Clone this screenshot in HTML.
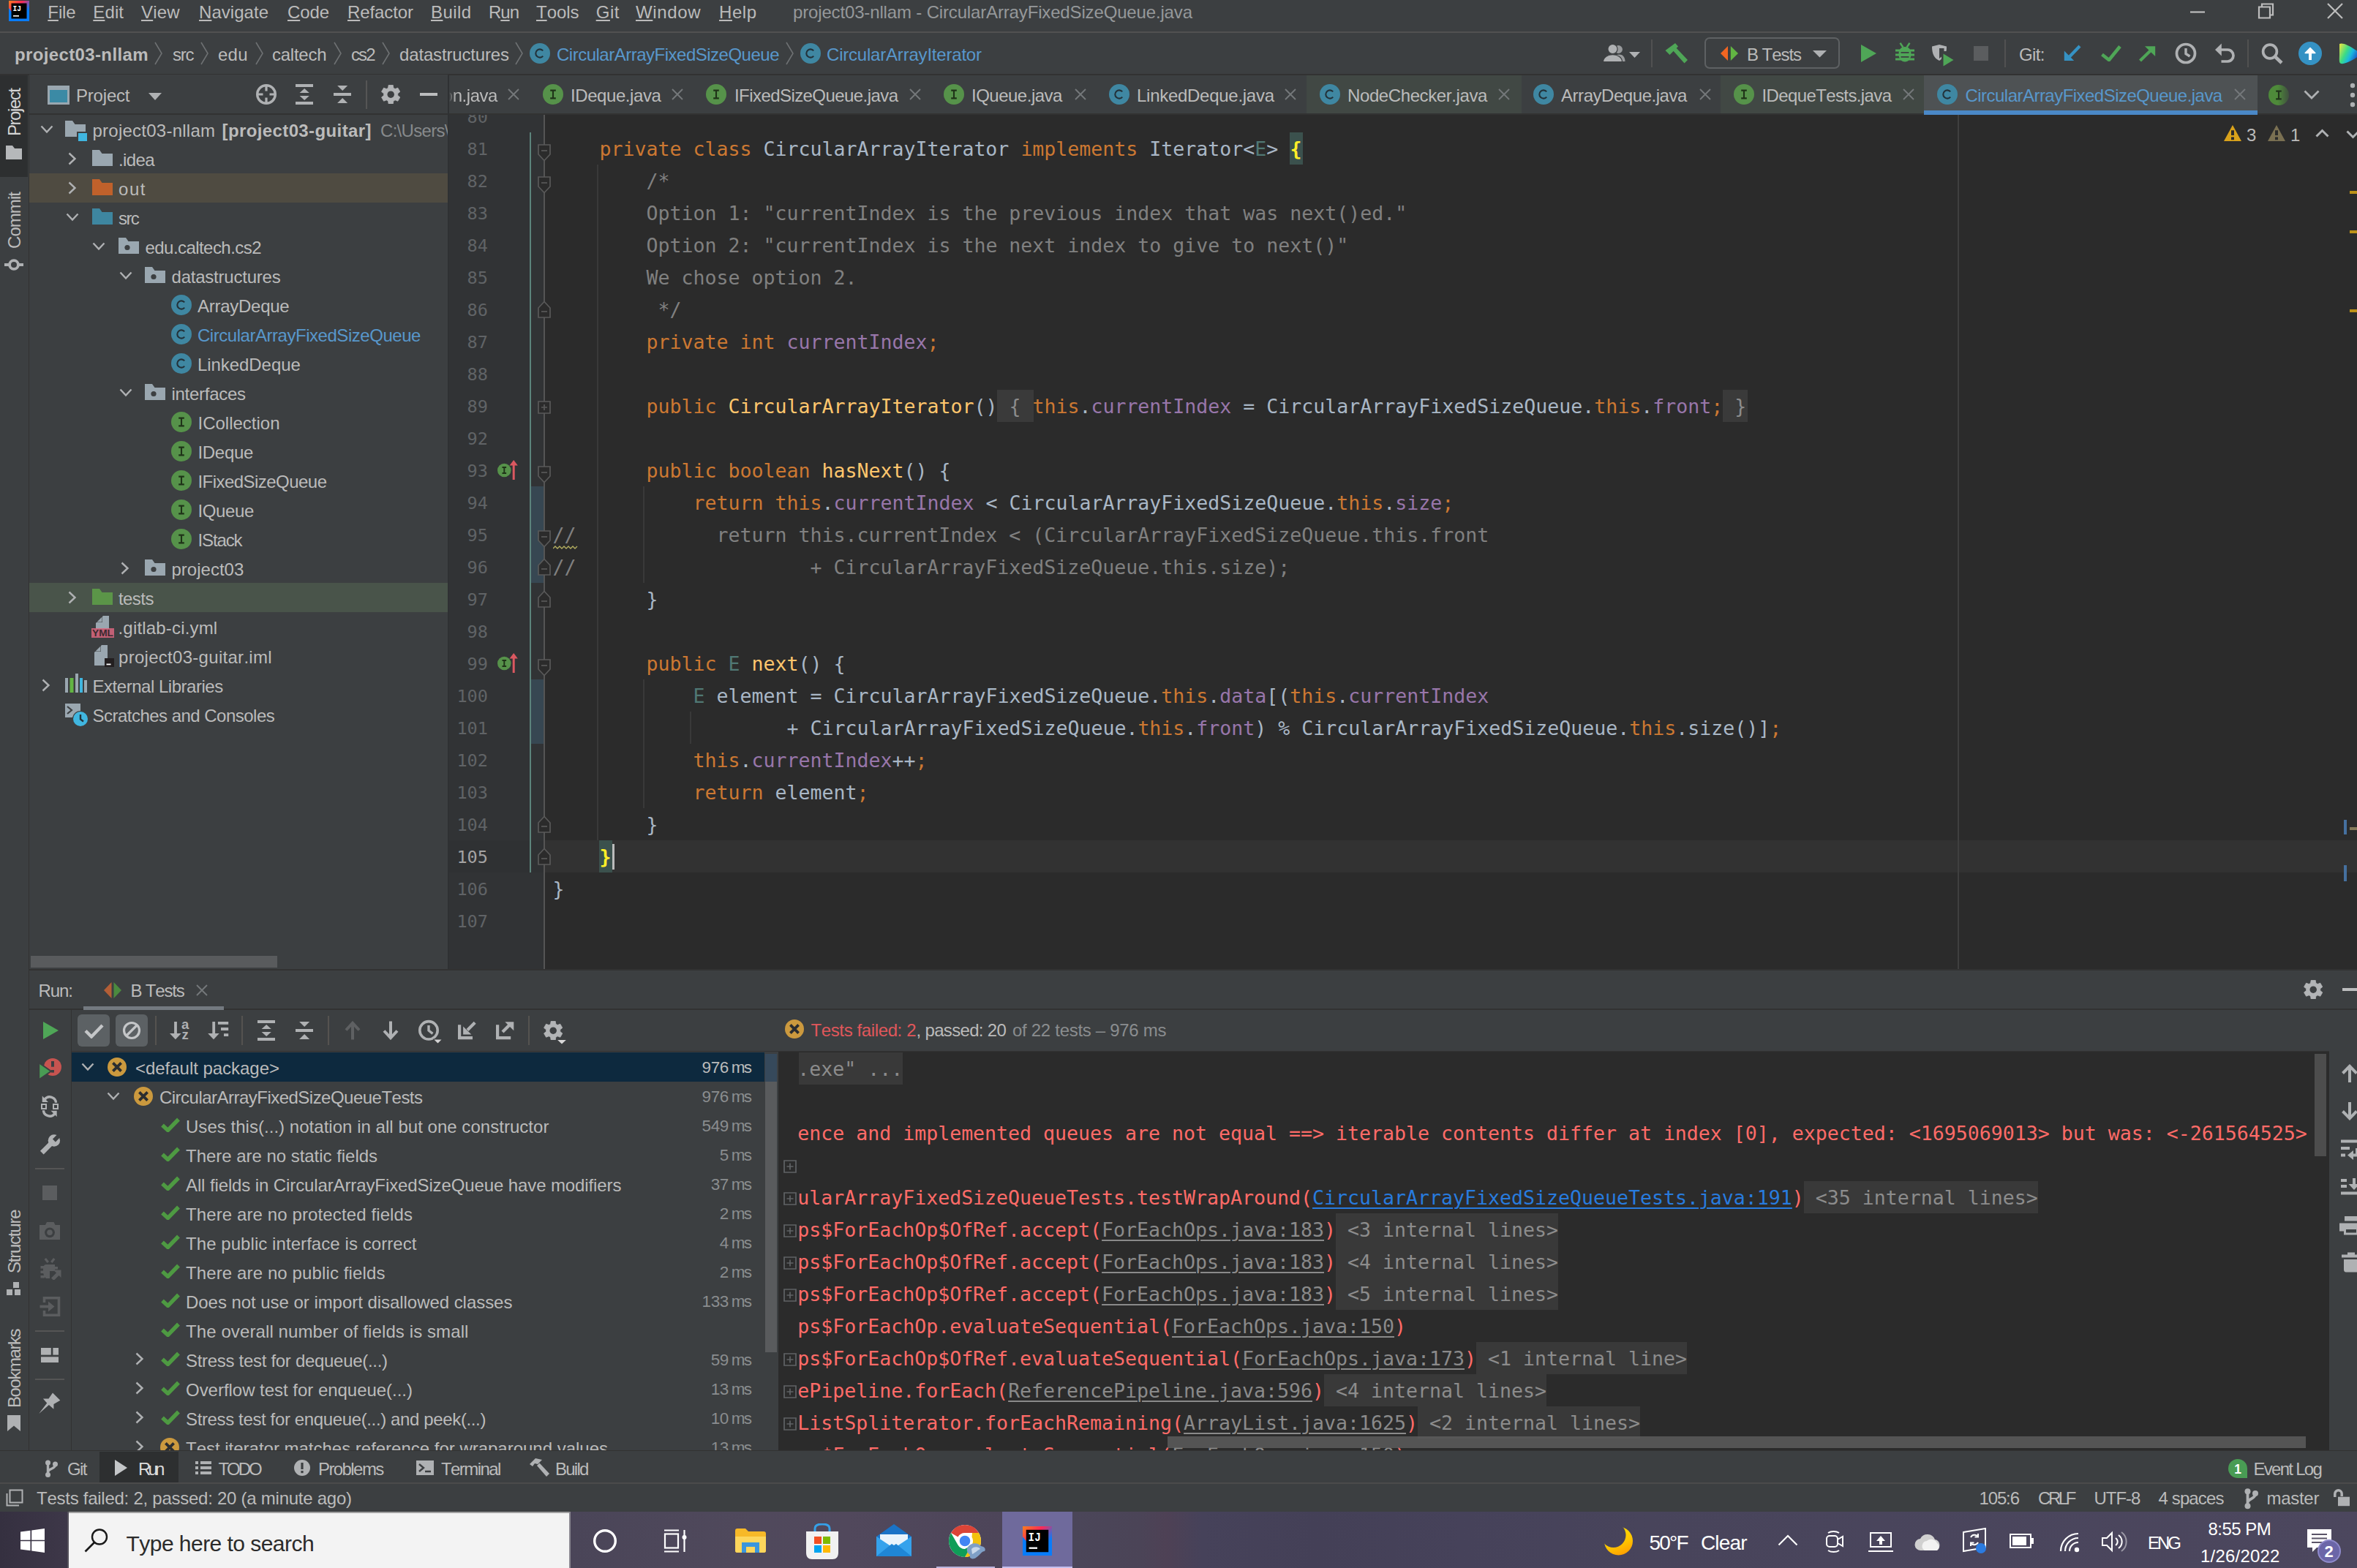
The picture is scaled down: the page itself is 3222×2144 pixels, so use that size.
<!DOCTYPE html>
<html><head><meta charset="utf-8"><title>project03-nllam - CircularArrayFixedSizeQueue.java</title><style>
html,body{margin:0;padding:0;background:#3c3f41;}
body{width:3222px;height:2144px;overflow:hidden;position:relative;font-kerning:none;}
#r{position:absolute;left:0;top:0;width:3222px;height:2144px;overflow:hidden;}
#r div,#r svg{position:absolute;white-space:pre;}
.u{font-family:"Liberation Sans",sans-serif;}
.m{font-family:"DejaVu Sans Mono","Liberation Mono",monospace;}
</style></head><body><div id="r">
<div style="left:0px;top:0px;width:3222px;height:2066px;background:#3c3f41;"></div>
<div style="left:0px;top:43px;width:3222px;height:2px;background:#515151;"></div>
<div style="left:0px;top:101px;width:3222px;height:2px;background:#323232;"></div>
<svg style="left:12px;top:1px;" width="28" height="28" viewBox="0 0 28 28"><defs><linearGradient id="lg1" x1="0" y1="0" x2="1" y2="1"><stop offset="0" stop-color="#fc801d"/><stop offset="0.35" stop-color="#fe2857"/><stop offset="0.7" stop-color="#087cfa"/><stop offset="1" stop-color="#087cfa"/></linearGradient></defs>
<rect width="28" height="28" fill="url(#lg1)"/><path d="M0 10 L0 28 L14 28 Z" fill="#087cfa"/><rect x="3.5" y="3.5" width="21" height="21" fill="#000"/><rect x="6" y="20" width="8" height="1.6" fill="#fff"/>
<text x="5.400" y="14.300" font-family="Liberation Mono, monospace" font-weight="bold" font-size="11.500" fill="#fff" textLength="11.500" lengthAdjust="spacingAndGlyphs">IJ</text></svg>
<div class="u" style="left:65.3px;top:1.18px;height:31px;line-height:31px;font-size:24px;color:#bbbbbb;letter-spacing:-0.091px;"><span style="text-decoration:underline;text-decoration-thickness:2px;text-underline-offset:2px">F</span>ile</div>
<div class="u" style="left:127.3px;top:1.18px;height:31px;line-height:31px;font-size:24px;color:#bbbbbb;letter-spacing:0.115px;"><span style="text-decoration:underline;text-decoration-thickness:2px;text-underline-offset:2px">E</span>dit</div>
<div class="u" style="left:193px;top:1.18px;height:31px;line-height:31px;font-size:24px;color:#bbbbbb;letter-spacing:0.160px;"><span style="text-decoration:underline;text-decoration-thickness:2px;text-underline-offset:2px">V</span>iew</div>
<div class="u" style="left:272px;top:1.18px;height:31px;line-height:31px;font-size:24px;color:#bbbbbb;letter-spacing:0.040px;"><span style="text-decoration:underline;text-decoration-thickness:2px;text-underline-offset:2px">N</span>avigate</div>
<div class="u" style="left:393px;top:1.18px;height:31px;line-height:31px;font-size:24px;color:#bbbbbb;letter-spacing:-0.125px;"><span style="text-decoration:underline;text-decoration-thickness:2px;text-underline-offset:2px">C</span>ode</div>
<div class="u" style="left:475px;top:1.18px;height:31px;line-height:31px;font-size:24px;color:#bbbbbb;letter-spacing:-0.100px;"><span style="text-decoration:underline;text-decoration-thickness:2px;text-underline-offset:2px">R</span>efactor</div>
<div class="u" style="left:589px;top:1.18px;height:31px;line-height:31px;font-size:24px;color:#bbbbbb;letter-spacing:0.408px;"><span style="text-decoration:underline;text-decoration-thickness:2px;text-underline-offset:2px">B</span>uild</div>
<div class="u" style="left:668px;top:1.18px;height:31px;line-height:31px;font-size:24px;color:#bbbbbb;letter-spacing:-1.014px;">R<span style="text-decoration:underline;text-decoration-thickness:2px;text-underline-offset:2px">u</span>n</div>
<div class="u" style="left:733px;top:1.18px;height:31px;line-height:31px;font-size:24px;color:#bbbbbb;letter-spacing:-0.047px;"><span style="text-decoration:underline;text-decoration-thickness:2px;text-underline-offset:2px">T</span>ools</div>
<div class="u" style="left:814.7px;top:1.18px;height:31px;line-height:31px;font-size:24px;color:#bbbbbb;letter-spacing:0.566px;"><span style="text-decoration:underline;text-decoration-thickness:2px;text-underline-offset:2px">G</span>it</div>
<div class="u" style="left:869px;top:1.18px;height:31px;line-height:31px;font-size:24px;color:#bbbbbb;letter-spacing:0.648px;"><span style="text-decoration:underline;text-decoration-thickness:2px;text-underline-offset:2px">W</span>indow</div>
<div class="u" style="left:983px;top:1.18px;height:31px;line-height:31px;font-size:24px;color:#bbbbbb;letter-spacing:0.547px;"><span style="text-decoration:underline;text-decoration-thickness:2px;text-underline-offset:2px">H</span>elp</div>
<div class="u" style="left:1084px;top:1.18px;height:31px;line-height:31px;font-size:24px;color:#95989a;letter-spacing:-0.154px;">project03-nllam - CircularArrayFixedSizeQueue.java</div>
<svg style="left:2990px;top:0px;" width="232" height="44" viewBox="0 0 232 44"><g stroke="#bdbdbd" stroke-width="2.2" fill="none"><path d="M4 16.5H24"/><path d="M98 9.5H113V24.5H98Z"/><path d="M102 9V5.5H117V20.5H113.5"/><path d="M192 5L212 25M212 5L192 25"/></g></svg>
<div class="u" style="left:20px;top:59.18px;height:31px;line-height:31px;font-size:24px;color:#bbbbbb;letter-spacing:0.365px;font-weight:bold;">project03-nllam</div>
<svg style="left:209px;top:57px;" width="16" height="32" viewBox="0 0 16 32"><path d="M3 1L12 16L3 31" stroke="#6e7173" stroke-width="1.6" fill="none"/></svg>
<div class="u" style="left:236px;top:59.18px;height:31px;line-height:31px;font-size:24px;color:#bbbbbb;letter-spacing:-1.246px;">src</div>
<svg style="left:272px;top:57px;" width="16" height="32" viewBox="0 0 16 32"><path d="M3 1L12 16L3 31" stroke="#6e7173" stroke-width="1.6" fill="none"/></svg>
<div class="u" style="left:298px;top:59.18px;height:31px;line-height:31px;font-size:24px;color:#bbbbbb;letter-spacing:0.229px;">edu</div>
<svg style="left:347px;top:57px;" width="16" height="32" viewBox="0 0 16 32"><path d="M3 1L12 16L3 31" stroke="#6e7173" stroke-width="1.6" fill="none"/></svg>
<div class="u" style="left:372px;top:59.18px;height:31px;line-height:31px;font-size:24px;color:#bbbbbb;letter-spacing:-0.257px;">caltech</div>
<svg style="left:454px;top:57px;" width="16" height="32" viewBox="0 0 16 32"><path d="M3 1L12 16L3 31" stroke="#6e7173" stroke-width="1.6" fill="none"/></svg>
<div class="u" style="left:480px;top:59.18px;height:31px;line-height:31px;font-size:24px;color:#bbbbbb;letter-spacing:-1.924px;">cs2</div>
<svg style="left:520px;top:57px;" width="16" height="32" viewBox="0 0 16 32"><path d="M3 1L12 16L3 31" stroke="#6e7173" stroke-width="1.6" fill="none"/></svg>
<div class="u" style="left:546px;top:59.18px;height:31px;line-height:31px;font-size:24px;color:#bbbbbb;letter-spacing:-0.160px;">datastructures</div>
<svg style="left:702px;top:57px;" width="16" height="32" viewBox="0 0 16 32"><path d="M3 1L12 16L3 31" stroke="#6e7173" stroke-width="1.6" fill="none"/></svg>
<svg style="left:723.5px;top:59px;" width="28" height="28" viewBox="0 0 28 28"><circle cx="14" cy="14" r="14" fill="#3f87a2"/><path d="M18.2 10.4A5.6 5.6 0 1 0 18.2 17.6" stroke="#23323a" stroke-width="2.1" fill="none"/></svg>
<div class="u" style="left:761px;top:59.18px;height:31px;line-height:31px;font-size:24px;color:#5897cb;letter-spacing:-0.498px;">CircularArrayFixedSizeQueue</div>
<svg style="left:1072px;top:57px;" width="16" height="32" viewBox="0 0 16 32"><path d="M3 1L12 16L3 31" stroke="#6e7173" stroke-width="1.6" fill="none"/></svg>
<svg style="left:1093.5px;top:59px;" width="28" height="28" viewBox="0 0 28 28"><circle cx="14" cy="14" r="14" fill="#3f87a2"/><path d="M18.2 10.4A5.6 5.6 0 1 0 18.2 17.6" stroke="#23323a" stroke-width="2.1" fill="none"/></svg>
<div class="u" style="left:1130px;top:59.18px;height:31px;line-height:31px;font-size:24px;color:#5897cb;letter-spacing:-0.202px;">CircularArrayIterator</div>
<div style="left:0px;top:103px;width:39px;height:1963px;background:#3c3f41;"></div>
<div style="left:39px;top:102px;width:1px;height:1882px;background:#323232;"></div>
<div style="left:0px;top:103px;width:38px;height:139px;background:#2d2f30;"></div>
<div class="u" style="left:20px;top:186px;font-size:24px;color:#d4d4d4;line-height:30px;height:30px;transform-origin:0 0;transform:rotate(-90deg) translate(0,-15px);letter-spacing:-1.449px;">Project</div>
<div class="u" style="left:20px;top:340px;font-size:24px;color:#bbb;line-height:30px;height:30px;transform-origin:0 0;transform:rotate(-90deg) translate(0,-15px);letter-spacing:-0.933px;">Commit</div>
<div class="u" style="left:20px;top:1741px;font-size:24px;color:#bbb;line-height:30px;height:30px;transform-origin:0 0;transform:rotate(-90deg) translate(0,-15px);letter-spacing:-1.234px;">Structure</div>
<div class="u" style="left:20px;top:1925px;font-size:24px;color:#bbb;line-height:30px;height:30px;transform-origin:0 0;transform:rotate(-90deg) translate(0,-15px);letter-spacing:-1.442px;">Bookmarks</div>
<svg style="left:8px;top:198px;" width="24" height="22" viewBox="0 0 24 22"><path d="M0 1H9L12 5H22V20H0Z" fill="#b6b8ba"/></svg>
<svg style="left:6px;top:349px;transform:rotate(90deg);" width="26" height="26" viewBox="0 0 26 26"><circle cx="13" cy="13" r="5.900" stroke="#afb1b3" stroke-width="3.800" fill="none"/><path d="M13 0V7.200M13 18.800V26" stroke="#afb1b3" stroke-width="3.800"/></svg>
<svg style="left:9px;top:1753px;" width="20" height="20" viewBox="0 0 20 20"><rect x="9" y="0" width="8" height="8" fill="#afb1b3"/><rect x="0" y="10" width="8" height="8" fill="#afb1b3"/><rect x="11" y="10" width="8" height="8" fill="#afb1b3"/></svg>
<svg style="left:10px;top:1935px;" width="18" height="22" viewBox="0 0 18 22"><path d="M0 0H18V22L9 14.500L0 22Z" fill="#afb1b3"/></svg>
<div style="left:40px;top:102px;width:572px;height:53px;background:#3c3f41;"></div>
<div style="left:40px;top:155px;width:572px;height:2px;background:#323232;"></div>
<div style="left:612px;top:103px;width:2px;height:1222px;background:#2f3133;"></div>
<svg style="left:65px;top:117px;" width="30" height="26" viewBox="0 0 30 26"><rect x="1.5" y="1.5" width="27" height="23" fill="#3b8aa5" stroke="#9aa7b0" stroke-width="3"/><rect x="0" y="0" width="30" height="6" fill="#9aa7b0"/></svg>
<div class="u" style="left:104px;top:115.18px;height:31px;line-height:31px;font-size:24px;color:#bbbbbb;letter-spacing:-0.199px;">Project</div>
<svg style="left:203px;top:126.5px;" width="18" height="10.5" viewBox="0 0 18 10.5"><path d="M0 0H18L9 10Z" fill="#afb1b3"/></svg>
<svg style="left:349px;top:114px;" width="30" height="30" viewBox="0 0 30 30"><g stroke="#afb1b3" fill="none"><circle cx="15" cy="15" r="12.3" stroke-width="3.4"/><path d="M15 3V10.5M15 19.5V27M3 15H10.5M19.5 15H27" stroke-width="3.2"/></g></svg>
<svg style="left:403.7px;top:115px;" width="24.4" height="28" viewBox="0 0 24.4 28"><g fill="#afb1b3"><rect x="0" y="0" width="24.400" height="4"/><rect x="0" y="24" width="24.400" height="4"/><path d="M12.200 6L18.800 12H5.600Z"/><path d="M12.200 22L18.800 16H5.600Z"/></g></svg>
<svg style="left:455.6px;top:117px;" width="24.4" height="24" viewBox="0 0 24.4 24"><g fill="#afb1b3"><rect x="0" y="10" width="24.400" height="4"/><path d="M12.200 6.900L19.200 0H5.100Z"/><path d="M12.200 17.100L19.200 24H5.100Z"/></g></svg>
<div style="left:500px;top:110px;width:2px;height:39px;background:#555555;"></div>
<svg style="left:520.8px;top:115.8px;" width="26.4" height="26.4" viewBox="0 0 26.4 26.4"><polygon points="16.83,4.21 16.21,0.35 10.19,0.35 9.57,4.21 8.42,4.93 7.23,5.56 3.58,4.16 0.56,9.38 3.59,11.85 3.65,13.20 3.59,14.55 0.56,17.02 3.58,22.24 7.23,20.84 8.42,21.47 9.57,22.19 10.19,26.05 16.21,26.05 16.83,22.19 17.98,21.47 19.17,20.84 22.82,22.24 25.84,17.02 22.81,14.55 22.75,13.20 22.81,11.85 25.84,9.38 22.82,4.16 19.17,5.56 17.98,4.93" fill="#b2b4b6" stroke="#b2b4b6" stroke-width="0.8" stroke-linejoin="round"/><circle cx="13.2" cy="13.2" r="4.70" fill="#3c3f41"/></svg>
<div style="left:573.8px;top:127px;width:24.6px;height:4px;background:#bcbdbe;"></div>
<div style="left:40px;top:237px;width:572px;height:40px;background:#4f4b41;"></div>
<div style="left:40px;top:797px;width:572px;height:40px;background:#49544a;"></div>
<svg style="left:54.5px;top:171px;" width="18" height="12" viewBox="0 0 18 12"><path d="M1.5 1.5L9 9.5L16.5 1.5" stroke="#afb1b3" stroke-width="2.4" fill="none"/></svg>
<svg style="left:89px;top:165px;" width="32" height="30" viewBox="0 0 32 30"><path d="M0 0H10L13.5 5H28V22H0Z" fill="#9aa7b0"/><rect x="16" y="15" width="14" height="13" fill="#3c3f41"/><rect x="18" y="17" width="12" height="11" fill="#40b6e0"/></svg>
<div class="u" style="left:126.5px;top:163.18px;height:31px;line-height:31px;font-size:24px;color:#bbbbbb;letter-spacing:0.245px;">project03-nllam</div>
<div class="u" style="left:303.5px;top:163.18px;height:31px;line-height:31px;font-size:24px;color:#bbbbbb;letter-spacing:0.391px;font-weight:bold;">[project03-guitar]</div>
<div style="left:520px;top:157px;width:92px;height:40px;overflow:hidden"><div class="u" style="left:0;top:5.5px;font-size:24px;line-height:31px;color:#878a8c;letter-spacing:-0.7px">C:\Users\nllam\</div></div>
<svg style="left:93px;top:208px;" width="12" height="18" viewBox="0 0 12 18"><path d="M1.5 1.5L9.5 9L1.5 16.5" stroke="#afb1b3" stroke-width="2.4" fill="none"/></svg>
<svg style="left:125.5px;top:205px;" width="28" height="22" viewBox="0 0 28 22"><path d="M0 0H10L13.5 5H28V22H0Z" fill="#9aa7b0"/></svg>
<div class="u" style="left:162px;top:203.18px;height:31px;line-height:31px;font-size:24px;color:#bbbbbb;letter-spacing:-0.636px;">.idea</div>
<svg style="left:93px;top:248px;" width="12" height="18" viewBox="0 0 12 18"><path d="M1.5 1.5L9.5 9L1.5 16.5" stroke="#afb1b3" stroke-width="2.4" fill="none"/></svg>
<svg style="left:125.5px;top:245px;" width="28" height="22" viewBox="0 0 28 22"><path d="M0 0H10L13.5 5H28V22H0Z" fill="#c0612b"/></svg>
<div class="u" style="left:162px;top:243.18px;height:31px;line-height:31px;font-size:24px;color:#bbbbbb;letter-spacing:1.568px;">out</div>
<svg style="left:90px;top:291px;" width="18" height="12" viewBox="0 0 18 12"><path d="M1.5 1.5L9 9.5L16.5 1.5" stroke="#afb1b3" stroke-width="2.4" fill="none"/></svg>
<svg style="left:125.5px;top:285px;" width="28" height="22" viewBox="0 0 28 22"><path d="M0 0H10L13.5 5H28V22H0Z" fill="#3e86a0"/></svg>
<div class="u" style="left:162px;top:283.18px;height:31px;line-height:31px;font-size:24px;color:#bbbbbb;letter-spacing:-1.596px;">src</div>
<svg style="left:126px;top:331px;" width="18" height="12" viewBox="0 0 18 12"><path d="M1.5 1.5L9 9.5L16.5 1.5" stroke="#afb1b3" stroke-width="2.4" fill="none"/></svg>
<svg style="left:161.8px;top:325px;" width="28" height="22" viewBox="0 0 28 22"><path d="M0 0H10L13.5 5H28V22H0Z" fill="#9aa7b0"/><circle cx="12" cy="13.5" r="3.6" fill="#3c3f41"/></svg>
<div class="u" style="left:198.5px;top:323.18px;height:31px;line-height:31px;font-size:24px;color:#bbbbbb;letter-spacing:-0.555px;">edu.caltech.cs2</div>
<svg style="left:162.5px;top:371px;" width="18" height="12" viewBox="0 0 18 12"><path d="M1.5 1.5L9 9.5L16.5 1.5" stroke="#afb1b3" stroke-width="2.4" fill="none"/></svg>
<svg style="left:198px;top:365px;" width="28" height="22" viewBox="0 0 28 22"><path d="M0 0H10L13.5 5H28V22H0Z" fill="#9aa7b0"/><circle cx="12" cy="13.5" r="3.6" fill="#3c3f41"/></svg>
<div class="u" style="left:234.5px;top:363.18px;height:31px;line-height:31px;font-size:24px;color:#bbbbbb;letter-spacing:-0.221px;">datastructures</div>
<svg style="left:234px;top:402.5px;" width="28" height="28" viewBox="0 0 28 28"><circle cx="14" cy="14" r="14" fill="#3f87a2"/><path d="M18.2 10.4A5.6 5.6 0 1 0 18.2 17.6" stroke="#23323a" stroke-width="2.1" fill="none"/></svg>
<div class="u" style="left:270px;top:403.18px;height:31px;line-height:31px;font-size:24px;color:#bbbbbb;letter-spacing:-0.263px;">ArrayDeque</div>
<svg style="left:234px;top:442.5px;" width="28" height="28" viewBox="0 0 28 28"><circle cx="14" cy="14" r="14" fill="#3f87a2"/><path d="M18.2 10.4A5.6 5.6 0 1 0 18.2 17.6" stroke="#23323a" stroke-width="2.1" fill="none"/></svg>
<div class="u" style="left:270px;top:443.18px;height:31px;line-height:31px;font-size:24px;color:#5897cb;letter-spacing:-0.463px;">CircularArrayFixedSizeQueue</div>
<svg style="left:234px;top:482.5px;" width="28" height="28" viewBox="0 0 28 28"><circle cx="14" cy="14" r="14" fill="#3f87a2"/><path d="M18.2 10.4A5.6 5.6 0 1 0 18.2 17.6" stroke="#23323a" stroke-width="2.1" fill="none"/></svg>
<div class="u" style="left:270px;top:483.18px;height:31px;line-height:31px;font-size:24px;color:#bbbbbb;letter-spacing:-0.065px;">LinkedDeque</div>
<svg style="left:162.5px;top:531px;" width="18" height="12" viewBox="0 0 18 12"><path d="M1.5 1.5L9 9.5L16.5 1.5" stroke="#afb1b3" stroke-width="2.4" fill="none"/></svg>
<svg style="left:198px;top:525px;" width="28" height="22" viewBox="0 0 28 22"><path d="M0 0H10L13.5 5H28V22H0Z" fill="#9aa7b0"/><circle cx="12" cy="13.5" r="3.6" fill="#3c3f41"/></svg>
<div class="u" style="left:234.5px;top:523.18px;height:31px;line-height:31px;font-size:24px;color:#bbbbbb;letter-spacing:-0.283px;">interfaces</div>
<svg style="left:234px;top:562.5px;" width="28" height="28" viewBox="0 0 28 28"><circle cx="14" cy="14" r="14" fill="#56924a"/><path d="M10.2 8.6H17.8M10.2 19.4H17.8M14 8.6V19.4" stroke="#1f3318" stroke-width="2.1" fill="none"/></svg>
<div class="u" style="left:270.5px;top:563.18px;height:31px;line-height:31px;font-size:24px;color:#bbbbbb;letter-spacing:-0.005px;">ICollection</div>
<svg style="left:234px;top:602.5px;" width="28" height="28" viewBox="0 0 28 28"><circle cx="14" cy="14" r="14" fill="#56924a"/><path d="M10.2 8.6H17.8M10.2 19.4H17.8M14 8.6V19.4" stroke="#1f3318" stroke-width="2.1" fill="none"/></svg>
<div class="u" style="left:270.5px;top:603.18px;height:31px;line-height:31px;font-size:24px;color:#bbbbbb;letter-spacing:-0.318px;">IDeque</div>
<svg style="left:234px;top:642.5px;" width="28" height="28" viewBox="0 0 28 28"><circle cx="14" cy="14" r="14" fill="#56924a"/><path d="M10.2 8.6H17.8M10.2 19.4H17.8M14 8.6V19.4" stroke="#1f3318" stroke-width="2.1" fill="none"/></svg>
<div class="u" style="left:270.5px;top:643.18px;height:31px;line-height:31px;font-size:24px;color:#bbbbbb;letter-spacing:-0.543px;">IFixedSizeQueue</div>
<svg style="left:234px;top:682.5px;" width="28" height="28" viewBox="0 0 28 28"><circle cx="14" cy="14" r="14" fill="#56924a"/><path d="M10.2 8.6H17.8M10.2 19.4H17.8M14 8.6V19.4" stroke="#1f3318" stroke-width="2.1" fill="none"/></svg>
<div class="u" style="left:270.5px;top:683.18px;height:31px;line-height:31px;font-size:24px;color:#bbbbbb;letter-spacing:-0.385px;">IQueue</div>
<svg style="left:234px;top:722.5px;" width="28" height="28" viewBox="0 0 28 28"><circle cx="14" cy="14" r="14" fill="#56924a"/><path d="M10.2 8.6H17.8M10.2 19.4H17.8M14 8.6V19.4" stroke="#1f3318" stroke-width="2.1" fill="none"/></svg>
<div class="u" style="left:270.5px;top:723.18px;height:31px;line-height:31px;font-size:24px;color:#bbbbbb;letter-spacing:-1.118px;">IStack</div>
<svg style="left:165px;top:768px;" width="12" height="18" viewBox="0 0 12 18"><path d="M1.5 1.5L9.5 9L1.5 16.5" stroke="#afb1b3" stroke-width="2.4" fill="none"/></svg>
<svg style="left:198px;top:765px;" width="28" height="22" viewBox="0 0 28 22"><path d="M0 0H10L13.5 5H28V22H0Z" fill="#9aa7b0"/><circle cx="12" cy="13.5" r="3.6" fill="#3c3f41"/></svg>
<div class="u" style="left:234.5px;top:763.18px;height:31px;line-height:31px;font-size:24px;color:#bbbbbb;letter-spacing:0.009px;">project03</div>
<svg style="left:93px;top:808px;" width="12" height="18" viewBox="0 0 12 18"><path d="M1.5 1.5L9.5 9L1.5 16.5" stroke="#afb1b3" stroke-width="2.4" fill="none"/></svg>
<svg style="left:125.5px;top:805px;" width="28" height="22" viewBox="0 0 28 22"><path d="M0 0H10L13.5 5H28V22H0Z" fill="#5b9548"/></svg>
<div class="u" style="left:162px;top:803.18px;height:31px;line-height:31px;font-size:24px;color:#bbbbbb;letter-spacing:-0.571px;">tests</div>
<svg style="left:125px;top:842px;" width="32" height="30" viewBox="0 0 32 30"><path d="M6 10L16 0H24V18H6Z" fill="#9aa7b0"/><path d="M6 9L15 0V9Z" fill="#3c3f41"/><path d="M7.5 8.5L14.5 1.5V8.5Z" fill="#9aa7b0"/><rect x="0" y="17" width="31" height="13" fill="#d9667f" opacity="0.85"/><text x="1" y="28.3" font-family="Liberation Sans, sans-serif" font-size="12.5" font-weight="bold" fill="#3a2a30" textLength="29" lengthAdjust="spacingAndGlyphs">YML</text></svg>
<div class="u" style="left:161.5px;top:843.18px;height:31px;line-height:31px;font-size:24px;color:#bbbbbb;letter-spacing:0.180px;">.gitlab-ci.yml</div>
<svg style="left:129px;top:882px;" width="28" height="30" viewBox="0 0 28 30"><path d="M0 10L10 0H18V28H0Z" fill="#9aa7b0"/><path d="M0 9L9 0V9Z" fill="#3c3f41"/><path d="M1.5 8.5L8.5 1.5V8.5Z" fill="#9aa7b0"/><rect x="14" y="18" width="13" height="12" fill="#231f20"/><rect x="16.5" y="25.5" width="6" height="1.8" fill="#fff"/></svg>
<div class="u" style="left:162px;top:883.18px;height:31px;line-height:31px;font-size:24px;color:#bbbbbb;letter-spacing:0.290px;">project03-guitar.iml</div>
<svg style="left:57px;top:928px;" width="12" height="18" viewBox="0 0 12 18"><path d="M1.5 1.5L9.5 9L1.5 16.5" stroke="#afb1b3" stroke-width="2.4" fill="none"/></svg>
<svg style="left:89px;top:921px;" width="30" height="26" viewBox="0 0 30 26"><rect x="0" y="6" width="4" height="20" fill="#9aa7b0"/><rect x="6.5" y="6" width="5" height="20" fill="#62b543"/><rect x="14" y="0" width="4" height="26" fill="#9aa7b0"/><rect x="20" y="6" width="4" height="20" fill="#40b6e0"/><rect x="26" y="9" width="4" height="17" fill="#9aa7b0"/></svg>
<div class="u" style="left:126.5px;top:923.18px;height:31px;line-height:31px;font-size:24px;color:#bbbbbb;letter-spacing:-0.474px;">External Libraries</div>
<svg style="left:89px;top:962px;" width="32" height="32" viewBox="0 0 32 32"><path d="M0 0H21V10A11 11 0 0 0 10 19H0Z" fill="#9aa7b0"/><path d="M3 4L9 9L3 14" stroke="#3c3f41" stroke-width="2.2" fill="none"/><circle cx="21" cy="21" r="10" fill="#40b6e0"/><path d="M21 15V21.5L25 24.5" stroke="#23323a" stroke-width="2.4" fill="none"/></svg>
<div class="u" style="left:126.5px;top:963.18px;height:31px;line-height:31px;font-size:24px;color:#bbbbbb;letter-spacing:-0.521px;">Scratches and Consoles</div>
<div style="left:42px;top:1307px;width:337px;height:16px;background:#595b5d;"></div>
<div style="left:40px;top:1325px;width:3182px;height:2px;background:#323232;"></div>
<svg style="left:2190px;top:58px;" width="34" height="30" viewBox="0 0 34 30"><g fill="#afb1b3"><circle cx="22.500" cy="9.500" r="5.400" opacity="0.800"/><path d="M20 17C26 15 31.500 18 31.500 26H24Z" opacity="0.800"/><circle cx="14.500" cy="9" r="6.600" stroke="#3c3f41" stroke-width="1.200"/><path d="M1.500 26.500C1.500 13.500 27.500 13.500 27.500 26.500Z" stroke="#3c3f41" stroke-width="1.200"/></g></svg>
<svg style="left:2227px;top:70.5px;" width="15" height="8" viewBox="0 0 15 8"><path d="M0 0H15L7.500 8Z" fill="#afb1b3"/></svg>
<div style="left:2257px;top:54px;width:2px;height:38px;background:#515151;"></div>
<svg style="left:2275px;top:58px;" width="34" height="30" viewBox="0 0 34 30"><g fill="#4fa657"><path d="M1.500 11L15 1L19 5.500L7.500 17Z"/><path d="M10.500 9.500L14.500 5.500L32 24L27.500 28.500Z"/></g></svg>
<div style="left:2330px;top:51px;width:185px;height:43px;border:2px solid #5e6163;border-radius:7px;box-sizing:border-box"></div>
<svg style="left:2352px;top:63px;" width="24" height="20" viewBox="0 0 24 20"><path d="M10 0V20L0 10Z" fill="#f26522"/><path d="M13.800 0V20L24 10Z" fill="#62b543"/></svg>
<div class="u" style="left:2388px;top:59.18px;height:31px;line-height:31px;font-size:24px;color:#bbbbbb;letter-spacing:-1.059px;">B Tests</div>
<svg style="left:2478px;top:69px;" width="19" height="9.5" viewBox="0 0 19 9.5"><path d="M0 0H19L9.500 9.500Z" fill="#afb1b3"/></svg>
<svg style="left:2544px;top:61px;" width="21" height="24" viewBox="0 0 21 24"><path d="M0 0L21 12L0 24Z" fill="#4fa657"/></svg>
<svg style="left:2590px;top:58px;" width="28" height="28" viewBox="0 0 28 28"><g fill="#4fa657"><path d="M14 6C19.500 6 22.500 10 22.500 16C22.500 22 19 26.500 14 26.500C9 26.500 5.500 22 5.500 16C5.500 10 8.500 6 14 6Z"/><path d="M6.500 1.500L8.500 0L12.500 6L10.500 7.500ZM21.500 1.500L19.500 0L15.500 6L17.500 7.500Z"/><rect x="1" y="9.500" width="26" height="3"/><rect x="1" y="15.500" width="26" height="3"/><rect x="1" y="21.500" width="26" height="3"/></g><path d="M8.500 13.800H19.500M8.500 19.800H19.500" stroke="#3c3f41" stroke-width="1.700"/></svg>
<svg style="left:2640px;top:60px;" width="34" height="32" viewBox="0 0 34 32"><path d="M1 3.500L11 1L21 3.500C21 6 21 8 20.500 10H14V20.500C13 21.500 12 22.500 11 23C4 19.500 1 13.500 1 3.500Z" fill="#afb1b3"/><path d="M11 6H17.500V10H14V17.500L11 20Z" fill="#3c3f41"/><path d="M16.500 13.500L30.500 22L16.500 30.500Z" fill="#4fa657"/></svg>
<div style="left:2698px;top:63px;width:20px;height:20px;background:#5b5d5f;"></div>
<div style="left:2740px;top:54px;width:2px;height:38px;background:#515151;"></div>
<div class="u" style="left:2760px;top:59.18px;height:31px;line-height:31px;font-size:24px;color:#bbbbbb;letter-spacing:-0.612px;">Git:</div>
<svg style="left:2820px;top:61px;" width="26" height="24" viewBox="0 0 26 24"><path d="M23 2L9 16.500" stroke="#3592c4" stroke-width="4.200" fill="none"/><path d="M1.800 8.500V22H15.200Z" fill="#3592c4"/></svg>
<svg style="left:2871px;top:61px;" width="30" height="23" viewBox="0 0 30 23"><path d="M2.500 13.500L12 21L27 2.500" stroke="#4fa657" stroke-width="4.600" fill="none"/></svg>
<svg style="left:2923px;top:61px;" width="25" height="24" viewBox="0 0 25 24"><path d="M2.500 22L18 7" stroke="#4fa657" stroke-width="4.200" fill="none"/><path d="M9 2.300H23.200V16Z" fill="#4fa657"/></svg>
<svg style="left:2973px;top:58px;" width="30" height="30" viewBox="0 0 30 30"><circle cx="15" cy="15" r="12.500" stroke="#afb1b3" stroke-width="3.700" fill="none"/><path d="M15 8V15.500L20.500 19" stroke="#afb1b3" stroke-width="3.400" fill="none"/></svg>
<svg style="left:3027px;top:58px;" width="30" height="30" viewBox="0 0 30 30"><path d="M9 10H18A8 8 0 0 1 18 26H9.500" stroke="#afb1b3" stroke-width="3.700" fill="none"/><path d="M1 10L9.800 1.500V18.500Z" fill="#afb1b3"/></svg>
<div style="left:3072px;top:54px;width:2px;height:38px;background:#515151;"></div>
<svg style="left:3091px;top:58px;" width="30" height="30" viewBox="0 0 30 30"><circle cx="12" cy="12.500" r="9.400" stroke="#afb1b3" stroke-width="3.700" fill="none"/><path d="M18.500 19L28 28" stroke="#afb1b3" stroke-width="4.600"/></svg>
<svg style="left:3142px;top:56.5px;" width="32" height="32" viewBox="0 0 32 32"><circle cx="16" cy="16" r="16" fill="#3592c4"/><path d="M16 25V12" stroke="#fff" stroke-width="4" fill="none"/><path d="M9.200 15.500L16 8.500L22.800 15.500Z" fill="#fff" stroke="#fff" stroke-width="1.500" stroke-linejoin="round"/></svg>
<svg style="left:3194px;top:58px;" width="30" height="32" viewBox="0 0 30 32"><defs><linearGradient id="lg2" x1="0" y1="0.200" x2="1" y2="0.700"><stop offset="0" stop-color="#d5e44a"/><stop offset="0.350" stop-color="#3ddc84"/><stop offset="0.600" stop-color="#19b8e0"/><stop offset="0.900" stop-color="#1a56c4"/></linearGradient></defs><path d="M4 2C8 0 16 3 30 13C32 15 32 17 30 19C20 26 10 30 6 29C3 28 4 24 4 16Z" fill="url(#lg2)"/></svg>
<div style="left:614px;top:103px;width:2608px;height:52px;background:#3c3f41;"></div>
<div style="left:614px;top:155px;width:2608px;height:2px;background:#323232;"></div>
<div style="left:1786px;top:103px;width:294px;height:52px;background:#414844;"></div>
<div style="left:2352px;top:103px;width:278px;height:52px;background:#414844;"></div>
<div style="left:2630px;top:103px;width:456px;height:52px;background:#4e5254;"></div>
<div style="left:2630px;top:151px;width:456px;height:6px;background:#4a88c7;"></div>
<div style="left:614px;top:102px;width:69px;height:53px;overflow:hidden;-webkit-mask-image:linear-gradient(90deg,transparent 0,#000 9px);mask-image:linear-gradient(90deg,transparent 0,#000 9px)"><div class="u" style="right:3px;top:12.500px;font-size:24px;line-height:31px;color:#bbb;letter-spacing:-0.450px">on.java</div></div>
<svg style="left:693.5px;top:121px;" width="16" height="16" viewBox="0 0 16 16"><path d="M1 1L15 15M15 1L1 15" stroke="#74787a" stroke-width="1.9" fill="none"/></svg>
<svg style="left:742px;top:115px;" width="28" height="28" viewBox="0 0 28 28"><circle cx="14" cy="14" r="14" fill="#56924a"/><path d="M10.2 8.6H17.8M10.2 19.4H17.8M14 8.6V19.4" stroke="#1f3318" stroke-width="2.1" fill="none"/></svg>
<div class="u" style="left:780px;top:115.18px;height:31px;line-height:31px;font-size:24px;color:#bbbbbb;letter-spacing:-0.429px;">IDeque.java</div>
<svg style="left:917.5px;top:121px;" width="16" height="16" viewBox="0 0 16 16"><path d="M1 1L15 15M15 1L1 15" stroke="#74787a" stroke-width="1.9" fill="none"/></svg>
<svg style="left:965px;top:115px;" width="28" height="28" viewBox="0 0 28 28"><circle cx="14" cy="14" r="14" fill="#56924a"/><path d="M10.2 8.6H17.8M10.2 19.4H17.8M14 8.6V19.4" stroke="#1f3318" stroke-width="2.1" fill="none"/></svg>
<div class="u" style="left:1004px;top:115.18px;height:31px;line-height:31px;font-size:24px;color:#bbbbbb;letter-spacing:-0.568px;">IFixedSizeQueue.java</div>
<svg style="left:1242.5px;top:121px;" width="16" height="16" viewBox="0 0 16 16"><path d="M1 1L15 15M15 1L1 15" stroke="#74787a" stroke-width="1.9" fill="none"/></svg>
<svg style="left:1290px;top:115px;" width="28" height="28" viewBox="0 0 28 28"><circle cx="14" cy="14" r="14" fill="#56924a"/><path d="M10.2 8.6H17.8M10.2 19.4H17.8M14 8.6V19.4" stroke="#1f3318" stroke-width="2.1" fill="none"/></svg>
<div class="u" style="left:1328px;top:115.18px;height:31px;line-height:31px;font-size:24px;color:#bbbbbb;letter-spacing:-0.502px;">IQueue.java</div>
<svg style="left:1468.5px;top:121px;" width="16" height="16" viewBox="0 0 16 16"><path d="M1 1L15 15M15 1L1 15" stroke="#74787a" stroke-width="1.9" fill="none"/></svg>
<svg style="left:1516px;top:115px;" width="28" height="28" viewBox="0 0 28 28"><circle cx="14" cy="14" r="14" fill="#3f87a2"/><path d="M18.2 10.4A5.6 5.6 0 1 0 18.2 17.6" stroke="#23323a" stroke-width="2.1" fill="none"/></svg>
<div class="u" style="left:1554px;top:115.18px;height:31px;line-height:31px;font-size:24px;color:#bbbbbb;letter-spacing:-0.276px;">LinkedDeque.java</div>
<svg style="left:1756px;top:121px;" width="16" height="16" viewBox="0 0 16 16"><path d="M1 1L15 15M15 1L1 15" stroke="#74787a" stroke-width="1.9" fill="none"/></svg>
<svg style="left:1803.7px;top:115px;" width="28" height="28" viewBox="0 0 28 28"><circle cx="14" cy="14" r="14" fill="#3f87a2"/><path d="M18.2 10.4A5.6 5.6 0 1 0 18.2 17.6" stroke="#23323a" stroke-width="2.1" fill="none"/></svg>
<div class="u" style="left:1842px;top:115.18px;height:31px;line-height:31px;font-size:24px;color:#bbbbbb;letter-spacing:-0.402px;">NodeChecker.java</div>
<svg style="left:2047.5px;top:121px;" width="16" height="16" viewBox="0 0 16 16"><path d="M1 1L15 15M15 1L1 15" stroke="#74787a" stroke-width="1.9" fill="none"/></svg>
<svg style="left:2096px;top:115px;" width="28" height="28" viewBox="0 0 28 28"><circle cx="14" cy="14" r="14" fill="#3f87a2"/><path d="M18.2 10.4A5.6 5.6 0 1 0 18.2 17.6" stroke="#23323a" stroke-width="2.1" fill="none"/></svg>
<div class="u" style="left:2134px;top:115.18px;height:31px;line-height:31px;font-size:24px;color:#bbbbbb;letter-spacing:-0.454px;">ArrayDeque.java</div>
<svg style="left:2322.5px;top:121px;" width="16" height="16" viewBox="0 0 16 16"><path d="M1 1L15 15M15 1L1 15" stroke="#74787a" stroke-width="1.9" fill="none"/></svg>
<svg style="left:2370px;top:115px;" width="28" height="28" viewBox="0 0 28 28"><circle cx="14" cy="14" r="14" fill="#56924a"/><path d="M10.2 8.6H17.8M10.2 19.4H17.8M14 8.6V19.4" stroke="#1f3318" stroke-width="2.1" fill="none"/></svg>
<div class="u" style="left:2408.5px;top:115.18px;height:31px;line-height:31px;font-size:24px;color:#bbbbbb;letter-spacing:-0.617px;">IDequeTests.java</div>
<svg style="left:2600.5px;top:121px;" width="16" height="16" viewBox="0 0 16 16"><path d="M1 1L15 15M15 1L1 15" stroke="#74787a" stroke-width="1.9" fill="none"/></svg>
<svg style="left:2647.7px;top:115px;" width="28" height="28" viewBox="0 0 28 28"><circle cx="14" cy="14" r="14" fill="#3f87a2"/><path d="M18.2 10.4A5.6 5.6 0 1 0 18.2 17.6" stroke="#23323a" stroke-width="2.1" fill="none"/></svg>
<div class="u" style="left:2686.5px;top:115.18px;height:31px;line-height:31px;font-size:24px;color:#5897cb;letter-spacing:-0.530px;">CircularArrayFixedSizeQueue.java</div>
<svg style="left:3054px;top:121px;" width="16" height="16" viewBox="0 0 16 16"><path d="M1 1L15 15M15 1L1 15" stroke="#74787a" stroke-width="1.9" fill="none"/></svg>
<div style="left:3100px;top:110px;width:34px;height:40px;overflow:hidden;-webkit-mask-image:linear-gradient(90deg,#000 40%,transparent 100%);mask-image:linear-gradient(90deg,#000 40%,transparent 100%)"><svg style="left:1px;top:6px" width="28" height="28" viewBox="0 0 28 28"><circle cx="14" cy="14" r="14" fill="#4e8a3a"/><path d="M10.2 8.6H17.8M10.2 19.4H17.8M14 8.6V19.4" stroke="#1f3318" stroke-width="2.1" fill="none"/></svg></div>
<svg style="left:3149px;top:123px;" width="22" height="14" viewBox="0 0 22 14"><path d="M1.5 1.5L11 11L20.5 1.5" stroke="#afb1b3" stroke-width="2.8" fill="none"/></svg>
<svg style="left:3212px;top:113px;" width="8" height="36" viewBox="0 0 8 36"><g fill="#afb1b3"><circle cx="4" cy="4" r="3.2"/><circle cx="4" cy="17" r="3.2"/><circle cx="4" cy="30" r="3.2"/></g></svg>
<div style="left:614px;top:157px;width:2608px;height:1168px;background:#2b2b2b;"></div>
<div style="left:614px;top:157px;width:130px;height:1168px;background:#313335;"></div>
<div style="left:744px;top:1149px;width:2478px;height:44px;background:#323232;"></div>
<div style="left:614px;top:1149px;width:130px;height:44px;background:#2f3133;"></div>
<div style="left:2676px;top:157px;width:2px;height:1168px;background:#3f3f3f;"></div>
<div style="left:724px;top:181px;width:2px;height:1012px;background:#5c837b;"></div>
<div style="left:726px;top:665px;width:17px;height:132px;background:#374752;"></div>
<div style="left:726px;top:929px;width:17px;height:88px;background:#374752;"></div>
<div style="left:743px;top:157px;width:2px;height:1168px;background:#555555;"></div>
<div style="left:816.2px;top:225px;width:1.5px;height:924px;background:#393939;"></div>
<div style="left:879.2px;top:665px;width:1.5px;height:132px;background:#393939;"></div>
<div style="left:879.2px;top:929px;width:1.5px;height:176px;background:#393939;"></div>
<div style="left:943.2px;top:973px;width:1.5px;height:44px;background:#393939;"></div>
<div class="m" style="right:2555px;top:188.83px;height:31px;line-height:31px;font-size:23.6px;color:#606366;">81</div>
<div class="m" style="right:2555px;top:232.83px;height:31px;line-height:31px;font-size:23.6px;color:#606366;">82</div>
<div class="m" style="right:2555px;top:276.83px;height:31px;line-height:31px;font-size:23.6px;color:#606366;">83</div>
<div class="m" style="right:2555px;top:320.83px;height:31px;line-height:31px;font-size:23.6px;color:#606366;">84</div>
<div class="m" style="right:2555px;top:364.83px;height:31px;line-height:31px;font-size:23.6px;color:#606366;">85</div>
<div class="m" style="right:2555px;top:408.83px;height:31px;line-height:31px;font-size:23.6px;color:#606366;">86</div>
<div class="m" style="right:2555px;top:452.83px;height:31px;line-height:31px;font-size:23.6px;color:#606366;">87</div>
<div class="m" style="right:2555px;top:496.83px;height:31px;line-height:31px;font-size:23.6px;color:#606366;">88</div>
<div class="m" style="right:2555px;top:540.83px;height:31px;line-height:31px;font-size:23.6px;color:#606366;">89</div>
<div class="m" style="right:2555px;top:584.83px;height:31px;line-height:31px;font-size:23.6px;color:#606366;">92</div>
<div class="m" style="right:2555px;top:628.83px;height:31px;line-height:31px;font-size:23.6px;color:#606366;">93</div>
<div class="m" style="right:2555px;top:672.83px;height:31px;line-height:31px;font-size:23.6px;color:#606366;">94</div>
<div class="m" style="right:2555px;top:716.83px;height:31px;line-height:31px;font-size:23.6px;color:#606366;">95</div>
<div class="m" style="right:2555px;top:760.83px;height:31px;line-height:31px;font-size:23.6px;color:#606366;">96</div>
<div class="m" style="right:2555px;top:804.83px;height:31px;line-height:31px;font-size:23.6px;color:#606366;">97</div>
<div class="m" style="right:2555px;top:848.83px;height:31px;line-height:31px;font-size:23.6px;color:#606366;">98</div>
<div class="m" style="right:2555px;top:892.83px;height:31px;line-height:31px;font-size:23.6px;color:#606366;">99</div>
<div class="m" style="right:2555px;top:936.83px;height:31px;line-height:31px;font-size:23.6px;color:#606366;">100</div>
<div class="m" style="right:2555px;top:980.83px;height:31px;line-height:31px;font-size:23.6px;color:#606366;">101</div>
<div class="m" style="right:2555px;top:1024.83px;height:31px;line-height:31px;font-size:23.6px;color:#606366;">102</div>
<div class="m" style="right:2555px;top:1068.83px;height:31px;line-height:31px;font-size:23.6px;color:#606366;">103</div>
<div class="m" style="right:2555px;top:1112.83px;height:31px;line-height:31px;font-size:23.6px;color:#606366;">104</div>
<div class="m" style="right:2555px;top:1156.83px;height:31px;line-height:31px;font-size:23.6px;color:#a4a3a3;">105</div>
<div class="m" style="right:2555px;top:1200.83px;height:31px;line-height:31px;font-size:23.6px;color:#606366;">106</div>
<div class="m" style="right:2555px;top:1244.83px;height:31px;line-height:31px;font-size:23.6px;color:#606366;">107</div>
<div style="left:613px;top:156.500px;width:131px;height:25px;overflow:hidden"><div class="m" style="right:77px;top:-11.700px;font-size:23.600px;line-height:31px;height:31px;color:#606366">80</div></div>
<div style="left:1762.5px;top:181px;width:18px;height:44px;background:#3b514d;"></div>
<div class="m" style="left:819.5px;top:185.79px;height:35px;line-height:35px;font-size:26.6px;color:#a9b7c6;letter-spacing:-0.015px;"><span style="color:#cc7832">private class </span><span style="color:#a9b7c6">CircularArrayIterator </span><span style="color:#cc7832">implements </span><span style="color:#a9b7c6">Iterator&lt;</span><span style="color:#507874">E</span><span style="color:#a9b7c6">&gt; </span></div>
<div class="m" style="left:1763.5px;top:185.79px;height:35px;line-height:35px;font-size:26.6px;color:#ffef28;font-weight:bold;">{</div>
<div class="m" style="left:883.5px;top:229.79px;height:35px;line-height:35px;font-size:26.6px;color:#a9b7c6;letter-spacing:-0.015px;"><span style="color:#808080">/*</span></div>
<div class="m" style="left:883.5px;top:273.79px;height:35px;line-height:35px;font-size:26.6px;color:#a9b7c6;letter-spacing:-0.015px;"><span style="color:#808080">Option 1: "currentIndex is the previous index that was next()ed."</span></div>
<div class="m" style="left:883.5px;top:317.79px;height:35px;line-height:35px;font-size:26.6px;color:#a9b7c6;letter-spacing:-0.015px;"><span style="color:#808080">Option 2: "currentIndex is the next index to give to next()"</span></div>
<div class="m" style="left:883.5px;top:361.79px;height:35px;line-height:35px;font-size:26.6px;color:#a9b7c6;letter-spacing:-0.015px;"><span style="color:#808080">We chose option 2.</span></div>
<div class="m" style="left:899.5px;top:405.79px;height:35px;line-height:35px;font-size:26.6px;color:#a9b7c6;letter-spacing:-0.015px;"><span style="color:#808080">*/</span></div>
<div class="m" style="left:883.5px;top:449.79px;height:35px;line-height:35px;font-size:26.6px;color:#a9b7c6;letter-spacing:-0.015px;"><span style="color:#cc7832">private int </span><span style="color:#9876aa">currentIndex</span><span style="color:#cc7832">;</span></div>
<div style="left:1362.5px;top:533px;width:50px;height:44px;background:#3a3a3a;"></div>
<div style="left:2354.5px;top:533px;width:34px;height:44px;background:#3a3a3a;"></div>
<div class="m" style="left:883.5px;top:537.79px;height:35px;line-height:35px;font-size:26.6px;color:#a9b7c6;letter-spacing:-0.015px;"><span style="color:#cc7832">public </span><span style="color:#ffc66d">CircularArrayIterator</span><span style="color:#a9b7c6">()</span><span style="color:#8c8c8c"> { </span><span style="color:#cc7832">this</span><span style="color:#a9b7c6">.</span><span style="color:#9876aa">currentIndex</span><span style="color:#a9b7c6"> = CircularArrayFixedSizeQueue.</span><span style="color:#cc7832">this</span><span style="color:#a9b7c6">.</span><span style="color:#9876aa">front</span><span style="color:#cc7832">;</span><span style="color:#8c8c8c"> }</span></div>
<div class="m" style="left:883.5px;top:625.79px;height:35px;line-height:35px;font-size:26.6px;color:#a9b7c6;letter-spacing:-0.015px;"><span style="color:#cc7832">public boolean </span><span style="color:#ffc66d">hasNext</span><span style="color:#a9b7c6">() {</span></div>
<div class="m" style="left:947.5px;top:669.79px;height:35px;line-height:35px;font-size:26.6px;color:#a9b7c6;letter-spacing:-0.015px;"><span style="color:#cc7832">return this</span><span style="color:#a9b7c6">.</span><span style="color:#9876aa">currentIndex</span><span style="color:#a9b7c6"> &lt; CircularArrayFixedSizeQueue.</span><span style="color:#cc7832">this</span><span style="color:#a9b7c6">.</span><span style="color:#9876aa">size</span><span style="color:#cc7832">;</span></div>
<div class="m" style="left:755.5px;top:713.79px;height:35px;line-height:35px;font-size:26.6px;color:#a9b7c6;letter-spacing:-0.015px;"><span style="color:#808080">//            return this.currentIndex &lt; (CircularArrayFixedSizeQueue.this.front</span></div>
<div class="m" style="left:755.5px;top:757.79px;height:35px;line-height:35px;font-size:26.6px;color:#a9b7c6;letter-spacing:-0.015px;"><span style="color:#808080">//                    + CircularArrayFixedSizeQueue.this.size);</span></div>
<div class="m" style="left:883.5px;top:801.79px;height:35px;line-height:35px;font-size:26.6px;color:#a9b7c6;letter-spacing:-0.015px;"><span style="color:#a9b7c6">}</span></div>
<div class="m" style="left:883.5px;top:889.79px;height:35px;line-height:35px;font-size:26.6px;color:#a9b7c6;letter-spacing:-0.015px;"><span style="color:#cc7832">public </span><span style="color:#507874">E </span><span style="color:#ffc66d">next</span><span style="color:#a9b7c6">() {</span></div>
<div class="m" style="left:947.5px;top:933.79px;height:35px;line-height:35px;font-size:26.6px;color:#a9b7c6;letter-spacing:-0.015px;"><span style="color:#507874">E </span><span style="color:#a9b7c6">element = CircularArrayFixedSizeQueue.</span><span style="color:#cc7832">this</span><span style="color:#a9b7c6">.</span><span style="color:#9876aa">data</span><span style="color:#a9b7c6">[(</span><span style="color:#cc7832">this</span><span style="color:#a9b7c6">.</span><span style="color:#9876aa">currentIndex</span></div>
<div class="m" style="left:1075.5px;top:977.79px;height:35px;line-height:35px;font-size:26.6px;color:#a9b7c6;letter-spacing:-0.015px;"><span style="color:#a9b7c6">+ CircularArrayFixedSizeQueue.</span><span style="color:#cc7832">this</span><span style="color:#a9b7c6">.</span><span style="color:#9876aa">front</span><span style="color:#a9b7c6">) % CircularArrayFixedSizeQueue.</span><span style="color:#cc7832">this</span><span style="color:#a9b7c6">.</span><span style="color:#a9b7c6">size()]</span><span style="color:#cc7832">;</span></div>
<div class="m" style="left:947.5px;top:1021.79px;height:35px;line-height:35px;font-size:26.6px;color:#a9b7c6;letter-spacing:-0.015px;"><span style="color:#cc7832">this</span><span style="color:#a9b7c6">.</span><span style="color:#9876aa">currentIndex</span><span style="color:#a9b7c6">++</span><span style="color:#cc7832">;</span></div>
<div class="m" style="left:947.5px;top:1065.79px;height:35px;line-height:35px;font-size:26.6px;color:#a9b7c6;letter-spacing:-0.015px;"><span style="color:#cc7832">return </span><span style="color:#a9b7c6">element</span><span style="color:#cc7832">;</span></div>
<div class="m" style="left:883.5px;top:1109.79px;height:35px;line-height:35px;font-size:26.6px;color:#a9b7c6;letter-spacing:-0.015px;"><span style="color:#a9b7c6">}</span></div>
<div style="left:818.5px;top:1149px;width:18px;height:44px;background:#3b514d;"></div>
<div class="m" style="left:819.5px;top:1153.79px;height:35px;line-height:35px;font-size:26.6px;color:#ffef28;font-weight:bold;">}</div>
<div style="left:836.5px;top:1154px;width:3px;height:35px;background:#bbbbbb;"></div>
<div class="m" style="left:755.5px;top:1197.79px;height:35px;line-height:35px;font-size:26.6px;color:#a9b7c6;letter-spacing:-0.015px;"><span style="color:#a9b7c6">}</span></div>
<svg style="left:756px;top:745px;" width="34" height="7" viewBox="0 0 34 7"><path d="M0 5L3 2L6 5L9 2L12 5L15 2L18 5L21 2L24 5L27 2L30 5L33 2" stroke="#b3ae60" stroke-width="1.4" fill="none"/></svg>
<svg style="left:735px;top:197px;" width="18" height="24" viewBox="0 0 18 24"><path d="M1 1H17V14L9 22.5L1 14Z" stroke="#595959" stroke-width="1.7" fill="#2b2b2b"/><path d="M5 9H13" stroke="#595959" stroke-width="1.7"/></svg>
<svg style="left:735px;top:241px;" width="18" height="24" viewBox="0 0 18 24"><path d="M1 1H17V14L9 22.5L1 14Z" stroke="#595959" stroke-width="1.7" fill="#2b2b2b"/><path d="M5 9H13" stroke="#595959" stroke-width="1.7"/></svg>
<svg style="left:735px;top:637px;" width="18" height="24" viewBox="0 0 18 24"><path d="M1 1H17V14L9 22.5L1 14Z" stroke="#595959" stroke-width="1.7" fill="#2b2b2b"/><path d="M5 9H13" stroke="#595959" stroke-width="1.7"/></svg>
<svg style="left:735px;top:725px;" width="18" height="24" viewBox="0 0 18 24"><path d="M1 1H17V14L9 22.5L1 14Z" stroke="#595959" stroke-width="1.7" fill="#2b2b2b"/><path d="M5 9H13" stroke="#595959" stroke-width="1.7"/></svg>
<svg style="left:735px;top:901px;" width="18" height="24" viewBox="0 0 18 24"><path d="M1 1H17V14L9 22.5L1 14Z" stroke="#595959" stroke-width="1.7" fill="#2b2b2b"/><path d="M5 9H13" stroke="#595959" stroke-width="1.7"/></svg>
<svg style="left:735px;top:411px;" width="18" height="24" viewBox="0 0 18 24"><path d="M1 23H17V10L9 1.5L1 10Z" stroke="#595959" stroke-width="1.7" fill="#2b2b2b"/><path d="M5 15H13" stroke="#595959" stroke-width="1.7"/></svg>
<svg style="left:735px;top:763px;" width="18" height="24" viewBox="0 0 18 24"><path d="M1 23H17V10L9 1.5L1 10Z" stroke="#595959" stroke-width="1.7" fill="#2b2b2b"/><path d="M5 15H13" stroke="#595959" stroke-width="1.7"/></svg>
<svg style="left:735px;top:807px;" width="18" height="24" viewBox="0 0 18 24"><path d="M1 23H17V10L9 1.5L1 10Z" stroke="#595959" stroke-width="1.7" fill="#2b2b2b"/><path d="M5 15H13" stroke="#595959" stroke-width="1.7"/></svg>
<svg style="left:735px;top:1115px;" width="18" height="24" viewBox="0 0 18 24"><path d="M1 23H17V10L9 1.5L1 10Z" stroke="#595959" stroke-width="1.7" fill="#2b2b2b"/><path d="M5 15H13" stroke="#595959" stroke-width="1.7"/></svg>
<svg style="left:735px;top:1159px;" width="18" height="24" viewBox="0 0 18 24"><path d="M1 23H17V10L9 1.5L1 10Z" stroke="#595959" stroke-width="1.7" fill="#2b2b2b"/><path d="M5 15H13" stroke="#595959" stroke-width="1.7"/></svg>
<svg style="left:735px;top:548px;" width="18" height="18" viewBox="0 0 18 18"><path d="M1 1H17V17H1Z" stroke="#595959" stroke-width="1.7" fill="#2b2b2b"/><path d="M5 9H13M9 5V13" stroke="#595959" stroke-width="1.7"/></svg>
<svg style="left:680px;top:629px;" width="30" height="30" viewBox="0 0 30 30"><circle cx="9.300" cy="14" r="9.300" fill="#56924a"/><path d="M6.500 10H12.100M6.500 18H12.100M9.300 10V18" stroke="#1f3318" stroke-width="1.900" fill="none"/><path d="M22.200 27V6" stroke="#db5860" stroke-width="3"/><path d="M22.200 0L27.800 7.500H16.600Z" fill="#db5860"/></svg>
<svg style="left:680px;top:893px;" width="30" height="30" viewBox="0 0 30 30"><circle cx="9.300" cy="14" r="9.300" fill="#56924a"/><path d="M6.500 10H12.100M6.500 18H12.100M9.300 10V18" stroke="#1f3318" stroke-width="1.900" fill="none"/><path d="M22.200 27V6" stroke="#db5860" stroke-width="3"/><path d="M22.200 0L27.800 7.500H16.600Z" fill="#db5860"/></svg>
<svg style="left:3040px;top:171px;" width="24" height="22" viewBox="0 0 24 22"><path d="M12 0L24 22H0Z" fill="#d9a21b"/><rect x="10" y="7.200" width="4" height="6.800" fill="#2b2b2b"/><rect x="10" y="16.400" width="4" height="3.800" fill="#2b2b2b"/></svg>
<div class="u" style="left:3071px;top:169.18px;height:31px;line-height:31px;font-size:24px;color:#bbbbbb;">3</div>
<svg style="left:3100px;top:171px;" width="24" height="22" viewBox="0 0 24 22"><path d="M12 0L24 22H0Z" fill="#7a7052"/><rect x="10" y="7.200" width="4" height="6.800" fill="#2b2b2b"/><rect x="10" y="16.400" width="4" height="3.800" fill="#2b2b2b"/></svg>
<div class="u" style="left:3131px;top:169.18px;height:31px;line-height:31px;font-size:24px;color:#bbbbbb;">1</div>
<svg style="left:3165px;top:176px;" width="19" height="12" viewBox="0 0 19 12"><path d="M1.500 10.500L9.500 2.500L17.500 10.500" stroke="#afb1b3" stroke-width="3" fill="none"/></svg>
<svg style="left:3207px;top:178px;" width="19" height="12" viewBox="0 0 19 12"><path d="M1.500 1.500L9.500 9.500L17.500 1.500" stroke="#afb1b3" stroke-width="3" fill="none"/></svg>
<div style="left:3212px;top:261px;width:10px;height:4px;background:#be9117;"></div>
<div style="left:3212px;top:315px;width:10px;height:4px;background:#be9117;"></div>
<div style="left:3212px;top:423px;width:10px;height:4px;background:#be9117;"></div>
<div style="left:3204px;top:1121px;width:4px;height:20px;background:#45709f;"></div>
<div style="left:3204px;top:1183px;width:4px;height:22px;background:#45709f;"></div>
<div style="left:3212px;top:1131px;width:10px;height:4px;background:#857a5a;"></div>
<div style="left:40px;top:1327px;width:3182px;height:53px;background:#3c3f41;"></div>
<div style="left:40px;top:1379px;width:3182px;height:2px;background:#323232;"></div>
<div class="u" style="left:52.5px;top:1339.18px;height:31px;line-height:31px;font-size:24px;color:#bbbbbb;letter-spacing:-1.132px;">Run:</div>
<svg style="left:142px;top:1343px;" width="24" height="22" viewBox="0 0 24 22"><path d="M10.5 0V22L0 11Z" fill="#b35e36"/><path d="M13.5 0V22L24 11Z" fill="#4b8a3f"/></svg>
<div class="u" style="left:178.5px;top:1339.18px;height:31px;line-height:31px;font-size:24px;color:#bbbbbb;letter-spacing:-1.175px;">B Tests</div>
<svg style="left:268px;top:1346px;" width="16" height="16" viewBox="0 0 16 16"><path d="M1 1L15 15M15 1L1 15" stroke="#74787a" stroke-width="1.9" fill="none"/></svg>
<div style="left:114px;top:1376px;width:192px;height:5px;background:#747a80;"></div>
<svg style="left:3149px;top:1340px;" width="26.4" height="26.4" viewBox="0 0 26.4 26.4"><polygon points="16.83,4.21 16.21,0.35 10.19,0.35 9.57,4.21 8.42,4.93 7.23,5.56 3.58,4.16 0.56,9.38 3.59,11.85 3.65,13.20 3.59,14.55 0.56,17.02 3.58,22.24 7.23,20.84 8.42,21.47 9.57,22.19 10.19,26.05 16.21,26.05 16.83,22.19 17.98,21.47 19.17,20.84 22.82,22.24 25.84,17.02 22.81,14.55 22.75,13.20 22.81,11.85 25.84,9.38 22.82,4.16 19.17,5.56 17.98,4.93" fill="#b2b4b6" stroke="#b2b4b6" stroke-width="0.8" stroke-linejoin="round"/><circle cx="13.2" cy="13.2" r="4.70" fill="#3c3f41"/></svg>
<div style="left:3202px;top:1351px;width:20px;height:4px;background:#bcbdbe;"></div>
<div style="left:97px;top:1381px;width:1px;height:603px;background:#323232;"></div>
<svg style="left:59px;top:1397px;" width="21" height="24" viewBox="0 0 21 24"><path d="M0 0L21 12L0 24Z" fill="#4fa657"/></svg>
<svg style="left:52px;top:1444px;" width="34" height="34" viewBox="0 0 34 34"><circle cx="20" cy="15" r="12" fill="#c75450"/><rect x="18" y="7" width="4" height="7.700" fill="#3c3f41"/><rect x="18" y="19" width="4" height="3.600" fill="#3c3f41"/><path d="M1.200 9.200V32.400L17.800 20.800Z" fill="#499c54" stroke="#3c3f41" stroke-width="2"/></svg>
<svg style="left:54px;top:1497px;" width="28" height="32" viewBox="0 0 28 32"><g stroke="#afb1b3" stroke-width="3.400" fill="none"><path d="M6.960 6.570A8.600 8.600 0 0 1 22.600 11.500"/><path d="M5.400 20.500A8.600 8.600 0 0 0 21.040 25.430"/></g><path d="M3.780 1.450V9.900H11.900Z" fill="#afb1b3"/><path d="M23.670 30V21.700H15.500Z" fill="#afb1b3"/><rect x="3" y="13" width="6" height="6" fill="#3c3f41" stroke="#3c3f41" stroke-width="4.400"/><rect x="19" y="13" width="6" height="6" fill="#3c3f41" stroke="#3c3f41" stroke-width="4.400"/><rect x="3" y="13" width="6" height="6" fill="none" stroke="#afb1b3" stroke-width="2"/><rect x="19" y="13" width="6" height="6" fill="none" stroke="#afb1b3" stroke-width="2"/></svg>
<svg style="left:52px;top:1548px;" width="32" height="32" viewBox="0 0 32 32"><path d="M21.900 11.500L5.300 28.200" stroke="#afb1b3" stroke-width="6.600"/><circle cx="21.900" cy="11.500" r="8.200" fill="#afb1b3"/><path d="M21.900 11.500L31.500 1.900" stroke="#3c3f41" stroke-width="5.600"/></svg>
<div style="left:48px;top:1597px;width:40px;height:1.5px;background:#555555;"></div>
<div style="left:58px;top:1621px;width:20px;height:20px;background:#5b5d5f;"></div>
<svg style="left:54px;top:1670.5px;" width="28" height="24" viewBox="0 0 28 24"><path d="M0 4H8L10 0H19.500L21.500 4H28V24H0Z" fill="#5b5d5f"/><circle cx="14" cy="14.300" r="6.900" fill="#3c3f41"/><circle cx="14" cy="14.300" r="3.800" fill="#5b5d5f"/></svg>
<svg style="left:54px;top:1720px;" width="32" height="30" viewBox="0 0 32 30"><g fill="#5b5d5f"><path d="M9 9H21V12H25V15.500H21V18H14V28H9C6 26 5 22 5 18V13C5 11 7 9 9 9Z"/><path d="M1.500 11H7V14.500H1.500ZM1.500 17.500H7V21H1.500ZM1.500 24H7V27.500H1.500Z"/><path d="M6.500 2L9 0L13 5L10.500 7ZM21.500 2L19 0L15 5L17.500 7Z"/><path d="M19 16.500H29.500V27L26.500 24L19.500 31L16 27.500L23 20.500Z"/></g></svg>
<svg style="left:53.5px;top:1773px;" width="29" height="27" viewBox="0 0 29 27"><path d="M6.500 8V1.800H26.500V25.200H6.500V19" stroke="#5b5d5f" stroke-width="3.600" fill="none"/><path d="M0.500 13.500H13" stroke="#5b5d5f" stroke-width="3.800"/><path d="M12 6.500L20.500 13.500L12 20.500Z" fill="#5b5d5f"/></svg>
<div style="left:48px;top:1819px;width:40px;height:1.5px;background:#555555;"></div>
<svg style="left:56px;top:1842.7px;" width="24" height="20" viewBox="0 0 24 20"><rect x="0" y="0" width="13.800" height="9.600" fill="#afb1b3"/><rect x="16.400" y="0" width="7.600" height="9.600" fill="#afb1b3"/><rect x="0" y="12.300" width="24" height="7.700" fill="#afb1b3"/></svg>
<div style="left:48px;top:1885px;width:40px;height:1.5px;background:#555555;"></div>
<svg style="left:53px;top:1904px;" width="30" height="30" viewBox="0 0 30 30"><path d="M19 0.400L29.300 10.700L20.400 16V22.800L13.900 17.100L0.200 29L11.200 14.400L5.900 8.400H13.500Z" fill="#afb1b3"/></svg>
<div style="left:106px;top:1387px;width:44px;height:44px;background:#5c6164;border-radius:6px;"></div>
<div style="left:158px;top:1387px;width:44px;height:44px;background:#5c6164;border-radius:6px;"></div>
<svg style="left:115px;top:1399px;" width="27" height="21" viewBox="0 0 27 21"><path d="M2 10.500L10 18.500L25 3" stroke="#c4c6c8" stroke-width="4.4" fill="none"/></svg>
<svg style="left:167px;top:1396px;" width="26" height="26" viewBox="0 0 26 26"><circle cx="13" cy="13" r="10.500" stroke="#c4c6c8" stroke-width="3.200" fill="none"/><path d="M5.500 20.500L20.500 5.500" stroke="#c4c6c8" stroke-width="3.200"/></svg>
<div style="left:212px;top:1389px;width:2px;height:40px;background:#555350;"></div>
<svg style="left:232px;top:1397px;" width="28" height="25" viewBox="0 0 28 25"><g fill="#afb1b3"><rect x="6.1" y="0" width="3.8" height="16.5"/><path d="M0 16H15.700L7.900 24.200Z"/></g><text x="16" y="10" font-family="Liberation Sans, sans-serif" font-weight="bold" font-size="18.500" fill="#afb1b3">a</text><text x="16.500" y="24" font-family="Liberation Sans, sans-serif" font-weight="bold" font-size="18.500" fill="#afb1b3">z</text></svg>
<svg style="left:284px;top:1397px;" width="29" height="25" viewBox="0 0 29 25"><g fill="#afb1b3"><rect x="6.300" y="0" width="3.800" height="16.500"/><path d="M0.200 16H15.700L8 24.200Z"/><rect x="13.900" y="0" width="14.300" height="3.800"/><rect x="18" y="8" width="10.200" height="4"/><rect x="22" y="16.200" width="6.200" height="3.800"/></g></svg>
<div style="left:330px;top:1389px;width:2px;height:40px;background:#555350;"></div>
<svg style="left:351.9px;top:1395px;" width="24.4" height="28" viewBox="0 0 24.4 28"><g fill="#afb1b3"><rect x="0" y="0" width="24.400" height="4"/><rect x="0" y="24" width="24.400" height="4"/><path d="M12.200 6L18.800 12H5.600Z"/><path d="M12.200 22L18.800 16H5.600Z"/></g></svg>
<svg style="left:403.8px;top:1397px;" width="24.4" height="24" viewBox="0 0 24.4 24"><g fill="#afb1b3"><rect x="0" y="10" width="24.400" height="4"/><path d="M12.200 6.900L19.200 0H5.100Z"/><path d="M12.200 17.100L19.200 24H5.100Z"/></g></svg>
<div style="left:448px;top:1389px;width:2px;height:40px;background:#555350;"></div>
<svg style="left:471px;top:1396px;" width="22" height="26" viewBox="0 0 22 26"><path d="M11 25.500V3.500M2 12.500L11 2.800L20 12.500" stroke="#5e6062" stroke-width="4" fill="none"/></svg>
<svg style="left:523px;top:1396px;" width="22" height="26" viewBox="0 0 22 26"><path d="M11 0.500V22.500M2 13.500L11 23.200L20 13.500" stroke="#afb1b3" stroke-width="4" fill="none"/></svg>
<svg style="left:571px;top:1394px;" width="34" height="34" viewBox="0 0 34 34"><circle cx="15" cy="14.800" r="12.200" stroke="#afb1b3" stroke-width="3.600" fill="none"/><path d="M15 8V15L20.500 19.300" stroke="#afb1b3" stroke-width="3.400" fill="none"/><path d="M21 26.500H34L27.500 33.500Z" fill="#3c3f41"/><path d="M22.400 27.500H32.500L27.500 32.500Z" fill="#d4d4d4"/></svg>
<svg style="left:626px;top:1396px;" width="25" height="26" viewBox="0 0 25 26"><path d="M2.100 5.300V23.100H20" stroke="#afb1b3" stroke-width="4.200" fill="none"/><path d="M23.200 2.200L13 12.400" stroke="#afb1b3" stroke-width="4.200"/><path d="M7.100 7.500V18.600H18.400Z" fill="#afb1b3"/></svg>
<svg style="left:677.8px;top:1396px;" width="25" height="26" viewBox="0 0 25 26"><path d="M2.100 5.300V23.100H20.200" stroke="#afb1b3" stroke-width="4.200" fill="none"/><path d="M9 15.100L19.500 4.600" stroke="#afb1b3" stroke-width="4.200"/><path d="M12.300 1.300H24.300V13.200Z" fill="#afb1b3"/></svg>
<div style="left:722px;top:1389px;width:2px;height:40px;background:#555350;"></div>
<svg style="left:743px;top:1395.8px;" width="26.4" height="26.4" viewBox="0 0 26.4 26.4"><polygon points="16.83,4.21 16.21,0.35 10.19,0.35 9.57,4.21 8.42,4.93 7.23,5.56 3.58,4.16 0.56,9.38 3.59,11.85 3.65,13.20 3.59,14.55 0.56,17.02 3.58,22.24 7.23,20.84 8.42,21.47 9.57,22.19 10.19,26.05 16.21,26.05 16.83,22.19 17.98,21.47 19.17,20.84 22.82,22.24 25.84,17.02 22.81,14.55 22.75,13.20 22.81,11.85 25.84,9.38 22.82,4.16 19.17,5.56 17.98,4.93" fill="#b2b4b6" stroke="#b2b4b6" stroke-width="0.8" stroke-linejoin="round"/><circle cx="13.2" cy="13.2" r="4.70" fill="#3c3f41"/></svg>
<svg style="left:760px;top:1420.5px;" width="15" height="8" viewBox="0 0 15 8"><path d="M0.500 0H14.500L7.500 7.500Z" fill="#3c3f41"/><path d="M2.200 1H13.800L8 6.500Z" fill="#d8d8d8"/></svg>
<svg style="left:1072.5px;top:1393.5px;" width="26" height="26" viewBox="0 0 26 26"><circle cx="13" cy="13" r="13" fill="#cb993e"/><path d="M7.4 7.4L18.6 18.6M18.6 7.4L7.4 18.6" stroke="#2b2d30" stroke-width="3.800"/></svg>
<div class="u" style="left:1108.5px;top:1393.18px;height:31px;line-height:31px;font-size:24px;color:#e0575b;letter-spacing:-0.386px;">Tests failed: 2</div>
<div class="u" style="left:1252.5px;top:1393.18px;height:31px;line-height:31px;font-size:24px;color:#bbbbbb;letter-spacing:-0.678px;">, passed: 20</div>
<div class="u" style="left:1384px;top:1393.18px;height:31px;line-height:31px;font-size:24px;color:#8a8d8f;letter-spacing:-0.296px;">of 22 tests – 976 ms</div>
<div style="left:97px;top:1437px;width:3087px;height:1px;background:#323232;"></div>
<div style="left:98px;top:1439px;width:947px;height:40px;background:#0d293e;"></div>
<div style="left:1045px;top:1438px;width:19px;height:546px;background:#3c3f41;"></div>
<div style="left:1046px;top:1441px;width:16px;height:408px;background:#595b5d;"></div>
<div style="left:1046px;top:1441px;width:16px;height:38px;background:#36495b;"></div>
<svg style="left:110.5px;top:1453px;" width="18" height="12" viewBox="0 0 18 12"><path d="M1.5 1.5L9 9.5L16.5 1.5" stroke="#afb1b3" stroke-width="2.4" fill="none"/></svg>
<svg style="left:147px;top:1446px;" width="26" height="26" viewBox="0 0 26 26"><circle cx="13" cy="13" r="13" fill="#cb993e"/><path d="M7.4 7.4L18.6 18.6M18.6 7.4L7.4 18.6" stroke="#2b2d30" stroke-width="3.800"/></svg>
<div class="u" style="left:185px;top:1445.18px;height:31px;line-height:31px;font-size:24px;color:#bbbbbb;letter-spacing:-0.031px;">&lt;default package&gt;</div>
<div class="u" style="right:2195.6px;top:1445.20px;height:29px;line-height:29px;font-size:22.5px;color:#bbb;letter-spacing:-0.400px;">976<span style="letter-spacing:-1.7px;word-spacing:-0.6px"> ms</span></div>
<svg style="left:146px;top:1493px;" width="18" height="12" viewBox="0 0 18 12"><path d="M1.5 1.5L9 9.5L16.5 1.5" stroke="#afb1b3" stroke-width="2.4" fill="none"/></svg>
<svg style="left:183px;top:1486px;" width="26" height="26" viewBox="0 0 26 26"><circle cx="13" cy="13" r="13" fill="#cb993e"/><path d="M7.4 7.4L18.6 18.6M18.6 7.4L7.4 18.6" stroke="#2b2d30" stroke-width="3.800"/></svg>
<div class="u" style="left:218px;top:1485.18px;height:31px;line-height:31px;font-size:24px;color:#bbbbbb;letter-spacing:-0.520px;">CircularArrayFixedSizeQueueTests</div>
<div class="u" style="right:2195.6px;top:1485.20px;height:29px;line-height:29px;font-size:22.5px;color:#8a8d8f;letter-spacing:-0.400px;">976<span style="letter-spacing:-1.7px;word-spacing:-0.6px"> ms</span></div>
<svg style="left:220px;top:1528px;" width="26" height="20" viewBox="0 0 26 20"><path d="M2 10.500L9.500 17.500L24 2.500" stroke="#4e9a42" stroke-width="5.400" fill="none"/></svg>
<div class="u" style="left:254px;top:1525.18px;height:31px;line-height:31px;font-size:24px;color:#bbbbbb;letter-spacing:0.030px;">Uses this(...) notation in all but one constructor</div>
<div class="u" style="right:2195.6px;top:1525.20px;height:29px;line-height:29px;font-size:22.5px;color:#8a8d8f;letter-spacing:-0.400px;">549<span style="letter-spacing:-1.7px;word-spacing:-0.6px"> ms</span></div>
<svg style="left:220px;top:1568px;" width="26" height="20" viewBox="0 0 26 20"><path d="M2 10.500L9.500 17.500L24 2.500" stroke="#4e9a42" stroke-width="5.400" fill="none"/></svg>
<div class="u" style="left:254px;top:1565.18px;height:31px;line-height:31px;font-size:24px;color:#bbbbbb;letter-spacing:-0.032px;">There are no static fields</div>
<div class="u" style="right:2195.6px;top:1565.20px;height:29px;line-height:29px;font-size:22.5px;color:#8a8d8f;letter-spacing:-0.400px;">5<span style="letter-spacing:-1.7px;word-spacing:-0.6px"> ms</span></div>
<svg style="left:220px;top:1608px;" width="26" height="20" viewBox="0 0 26 20"><path d="M2 10.500L9.500 17.500L24 2.500" stroke="#4e9a42" stroke-width="5.400" fill="none"/></svg>
<div class="u" style="left:254px;top:1605.18px;height:31px;line-height:31px;font-size:24px;color:#bbbbbb;letter-spacing:-0.112px;">All fields in CircularArrayFixedSizeQueue have modifiers</div>
<div class="u" style="right:2195.6px;top:1605.20px;height:29px;line-height:29px;font-size:22.5px;color:#8a8d8f;letter-spacing:-0.400px;">37<span style="letter-spacing:-1.7px;word-spacing:-0.6px"> ms</span></div>
<svg style="left:220px;top:1648px;" width="26" height="20" viewBox="0 0 26 20"><path d="M2 10.500L9.500 17.500L24 2.500" stroke="#4e9a42" stroke-width="5.400" fill="none"/></svg>
<div class="u" style="left:254px;top:1645.18px;height:31px;line-height:31px;font-size:24px;color:#bbbbbb;letter-spacing:0.113px;">There are no protected fields</div>
<div class="u" style="right:2195.6px;top:1645.20px;height:29px;line-height:29px;font-size:22.5px;color:#8a8d8f;letter-spacing:-0.400px;">2<span style="letter-spacing:-1.7px;word-spacing:-0.6px"> ms</span></div>
<svg style="left:220px;top:1688px;" width="26" height="20" viewBox="0 0 26 20"><path d="M2 10.500L9.500 17.500L24 2.500" stroke="#4e9a42" stroke-width="5.400" fill="none"/></svg>
<div class="u" style="left:254px;top:1685.18px;height:31px;line-height:31px;font-size:24px;color:#bbbbbb;letter-spacing:0.065px;">The public interface is correct</div>
<div class="u" style="right:2195.6px;top:1685.20px;height:29px;line-height:29px;font-size:22.5px;color:#8a8d8f;letter-spacing:-0.400px;">4<span style="letter-spacing:-1.7px;word-spacing:-0.6px"> ms</span></div>
<svg style="left:220px;top:1728px;" width="26" height="20" viewBox="0 0 26 20"><path d="M2 10.500L9.500 17.500L24 2.500" stroke="#4e9a42" stroke-width="5.400" fill="none"/></svg>
<div class="u" style="left:254px;top:1725.18px;height:31px;line-height:31px;font-size:24px;color:#bbbbbb;letter-spacing:0.117px;">There are no public fields</div>
<div class="u" style="right:2195.6px;top:1725.20px;height:29px;line-height:29px;font-size:22.5px;color:#8a8d8f;letter-spacing:-0.400px;">2<span style="letter-spacing:-1.7px;word-spacing:-0.6px"> ms</span></div>
<svg style="left:220px;top:1768px;" width="26" height="20" viewBox="0 0 26 20"><path d="M2 10.500L9.500 17.500L24 2.500" stroke="#4e9a42" stroke-width="5.400" fill="none"/></svg>
<div class="u" style="left:254px;top:1765.18px;height:31px;line-height:31px;font-size:24px;color:#bbbbbb;letter-spacing:-0.045px;">Does not use or import disallowed classes</div>
<div class="u" style="right:2195.6px;top:1765.20px;height:29px;line-height:29px;font-size:22.5px;color:#8a8d8f;letter-spacing:-0.400px;">133<span style="letter-spacing:-1.7px;word-spacing:-0.6px"> ms</span></div>
<svg style="left:220px;top:1808px;" width="26" height="20" viewBox="0 0 26 20"><path d="M2 10.500L9.500 17.500L24 2.500" stroke="#4e9a42" stroke-width="5.400" fill="none"/></svg>
<div class="u" style="left:254px;top:1805.18px;height:31px;line-height:31px;font-size:24px;color:#bbbbbb;letter-spacing:0.100px;">The overall number of fields is small</div>
<svg style="left:220px;top:1848px;" width="26" height="20" viewBox="0 0 26 20"><path d="M2 10.500L9.500 17.500L24 2.500" stroke="#4e9a42" stroke-width="5.400" fill="none"/></svg>
<div class="u" style="left:254px;top:1845.18px;height:31px;line-height:31px;font-size:24px;color:#bbbbbb;letter-spacing:-0.301px;">Stress test for dequeue(...)</div>
<div class="u" style="right:2195.6px;top:1845.20px;height:29px;line-height:29px;font-size:22.5px;color:#8a8d8f;letter-spacing:-0.400px;">59<span style="letter-spacing:-1.7px;word-spacing:-0.6px"> ms</span></div>
<svg style="left:185px;top:1849px;" width="12" height="18" viewBox="0 0 12 18"><path d="M1.5 1.5L9.5 9L1.5 16.5" stroke="#afb1b3" stroke-width="2.4" fill="none"/></svg>
<svg style="left:220px;top:1888px;" width="26" height="20" viewBox="0 0 26 20"><path d="M2 10.500L9.500 17.500L24 2.500" stroke="#4e9a42" stroke-width="5.400" fill="none"/></svg>
<div class="u" style="left:254px;top:1885.18px;height:31px;line-height:31px;font-size:24px;color:#bbbbbb;letter-spacing:-0.028px;">Overflow test for enqueue(...)</div>
<div class="u" style="right:2195.6px;top:1885.20px;height:29px;line-height:29px;font-size:22.5px;color:#8a8d8f;letter-spacing:-0.400px;">13<span style="letter-spacing:-1.7px;word-spacing:-0.6px"> ms</span></div>
<svg style="left:185px;top:1889px;" width="12" height="18" viewBox="0 0 12 18"><path d="M1.5 1.5L9.5 9L1.5 16.5" stroke="#afb1b3" stroke-width="2.4" fill="none"/></svg>
<svg style="left:220px;top:1928px;" width="26" height="20" viewBox="0 0 26 20"><path d="M2 10.500L9.500 17.500L24 2.500" stroke="#4e9a42" stroke-width="5.400" fill="none"/></svg>
<div class="u" style="left:254px;top:1925.18px;height:31px;line-height:31px;font-size:24px;color:#bbbbbb;letter-spacing:-0.369px;">Stress test for enqueue(...) and peek(...)</div>
<div class="u" style="right:2195.6px;top:1925.20px;height:29px;line-height:29px;font-size:22.5px;color:#8a8d8f;letter-spacing:-0.400px;">10<span style="letter-spacing:-1.7px;word-spacing:-0.6px"> ms</span></div>
<svg style="left:185px;top:1929px;" width="12" height="18" viewBox="0 0 12 18"><path d="M1.5 1.5L9.5 9L1.5 16.5" stroke="#afb1b3" stroke-width="2.4" fill="none"/></svg>
<svg style="left:185px;top:1969px;" width="12" height="18" viewBox="0 0 12 18"><path d="M1.5 1.5L9.5 9L1.5 16.5" stroke="#afb1b3" stroke-width="2.4" fill="none"/></svg>
<svg style="left:219px;top:1966px;" width="26" height="26" viewBox="0 0 26 26"><circle cx="13" cy="13" r="13" fill="#cb993e"/><path d="M7.4 7.4L18.6 18.6M18.6 7.4L7.4 18.6" stroke="#2b2d30" stroke-width="3.800"/></svg>
<div class="u" style="left:254px;top:1965.18px;height:31px;line-height:31px;font-size:24px;color:#bbbbbb;letter-spacing:-0.012px;">Test iterator matches reference for wraparound values</div>
<div class="u" style="right:2195.6px;top:1965.20px;height:29px;line-height:29px;font-size:22.5px;color:#8a8d8f;letter-spacing:-0.400px;">13<span style="letter-spacing:-1.7px;word-spacing:-0.6px"> ms</span></div>
<div style="left:1064px;top:1438px;width:2120px;height:546px;background:#2b2b2b;"></div>
<div style="left:3184px;top:1438px;width:38px;height:546px;background:#3c3f41;"></div>
<div style="left:1091.9px;top:1439px;width:142.4px;height:44px;background:#393939;"></div>
<div class="m" style="left:1090.2px;top:1443.99px;height:35px;line-height:35px;font-size:26.6px;color:#ff6b68;letter-spacing:-0.015px;"><span style="color:#8c8c8c;">.exe" ...</span></div>
<div class="m" style="left:1090.2px;top:1531.99px;height:35px;line-height:35px;font-size:26.6px;color:#ff6b68;letter-spacing:-0.015px;"><span style="color:#ff6b68;">ence and implemented queues are not equal ==&gt; iterable contents differ at index [0], expected: &lt;1695069013&gt; but was: &lt;-261564525&gt;</span></div>
<svg style="left:1071px;top:1586px;" width="18" height="18" viewBox="0 0 18 18"><path d="M1 1H17V17H1Z" stroke="#606366" stroke-width="1.700" fill="none"/><path d="M4.500 9H13.500M9 4.500V13.500" stroke="#606366" stroke-width="1.700"/></svg>
<svg style="left:1071px;top:1630px;" width="18" height="18" viewBox="0 0 18 18"><path d="M1 1H17V17H1Z" stroke="#606366" stroke-width="1.700" fill="none"/><path d="M4.500 9H13.500M9 4.500V13.500" stroke="#606366" stroke-width="1.700"/></svg>
<div style="left:2466.2px;top:1615px;width:320px;height:44px;background:#393939;"></div>
<div class="m" style="left:1090.2px;top:1619.99px;height:35px;line-height:35px;font-size:26.6px;color:#ff6b68;letter-spacing:-0.015px;"><span style="color:#ff6b68;">ularArrayFixedSizeQueueTests.testWrapAround(</span><span style="color:#287bde;text-decoration:underline;text-decoration-thickness:2px;text-underline-offset:4px;">CircularArrayFixedSizeQueueTests.java:191</span><span style="color:#ff6b68;">)</span><span style="color:#8c8c8c;"> &lt;35 internal lines&gt;</span></div>
<svg style="left:1071px;top:1674px;" width="18" height="18" viewBox="0 0 18 18"><path d="M1 1H17V17H1Z" stroke="#606366" stroke-width="1.700" fill="none"/><path d="M4.500 9H13.500M9 4.500V13.500" stroke="#606366" stroke-width="1.700"/></svg>
<div style="left:1826.2px;top:1659px;width:304px;height:44px;background:#393939;"></div>
<div class="m" style="left:1090.2px;top:1663.99px;height:35px;line-height:35px;font-size:26.6px;color:#ff6b68;letter-spacing:-0.015px;"><span style="color:#ff6b68;">ps$ForEachOp$OfRef.accept(</span><span style="color:#8a8a8a;text-decoration:underline;text-decoration-thickness:2px;text-underline-offset:4px;">ForEachOps.java:183</span><span style="color:#ff6b68;">)</span><span style="color:#8c8c8c;"> &lt;3 internal lines&gt;</span></div>
<svg style="left:1071px;top:1718px;" width="18" height="18" viewBox="0 0 18 18"><path d="M1 1H17V17H1Z" stroke="#606366" stroke-width="1.700" fill="none"/><path d="M4.500 9H13.500M9 4.500V13.500" stroke="#606366" stroke-width="1.700"/></svg>
<div style="left:1826.2px;top:1703px;width:304px;height:44px;background:#393939;"></div>
<div class="m" style="left:1090.2px;top:1707.99px;height:35px;line-height:35px;font-size:26.6px;color:#ff6b68;letter-spacing:-0.015px;"><span style="color:#ff6b68;">ps$ForEachOp$OfRef.accept(</span><span style="color:#8a8a8a;text-decoration:underline;text-decoration-thickness:2px;text-underline-offset:4px;">ForEachOps.java:183</span><span style="color:#ff6b68;">)</span><span style="color:#8c8c8c;"> &lt;4 internal lines&gt;</span></div>
<svg style="left:1071px;top:1762px;" width="18" height="18" viewBox="0 0 18 18"><path d="M1 1H17V17H1Z" stroke="#606366" stroke-width="1.700" fill="none"/><path d="M4.500 9H13.500M9 4.500V13.500" stroke="#606366" stroke-width="1.700"/></svg>
<div style="left:1826.2px;top:1747px;width:304px;height:44px;background:#393939;"></div>
<div class="m" style="left:1090.2px;top:1751.99px;height:35px;line-height:35px;font-size:26.6px;color:#ff6b68;letter-spacing:-0.015px;"><span style="color:#ff6b68;">ps$ForEachOp$OfRef.accept(</span><span style="color:#8a8a8a;text-decoration:underline;text-decoration-thickness:2px;text-underline-offset:4px;">ForEachOps.java:183</span><span style="color:#ff6b68;">)</span><span style="color:#8c8c8c;"> &lt;5 internal lines&gt;</span></div>
<div class="m" style="left:1090.2px;top:1795.99px;height:35px;line-height:35px;font-size:26.6px;color:#ff6b68;letter-spacing:-0.015px;"><span style="color:#ff6b68;">ps$ForEachOp.evaluateSequential(</span><span style="color:#8a8a8a;text-decoration:underline;text-decoration-thickness:2px;text-underline-offset:4px;">ForEachOps.java:150</span><span style="color:#ff6b68;">)</span></div>
<svg style="left:1071px;top:1850px;" width="18" height="18" viewBox="0 0 18 18"><path d="M1 1H17V17H1Z" stroke="#606366" stroke-width="1.700" fill="none"/><path d="M4.500 9H13.500M9 4.500V13.500" stroke="#606366" stroke-width="1.700"/></svg>
<div style="left:2018.2px;top:1835px;width:288px;height:44px;background:#393939;"></div>
<div class="m" style="left:1090.2px;top:1839.99px;height:35px;line-height:35px;font-size:26.6px;color:#ff6b68;letter-spacing:-0.015px;"><span style="color:#ff6b68;">ps$ForEachOp$OfRef.evaluateSequential(</span><span style="color:#8a8a8a;text-decoration:underline;text-decoration-thickness:2px;text-underline-offset:4px;">ForEachOps.java:173</span><span style="color:#ff6b68;">)</span><span style="color:#8c8c8c;"> &lt;1 internal line&gt;</span></div>
<svg style="left:1071px;top:1894px;" width="18" height="18" viewBox="0 0 18 18"><path d="M1 1H17V17H1Z" stroke="#606366" stroke-width="1.700" fill="none"/><path d="M4.500 9H13.500M9 4.500V13.500" stroke="#606366" stroke-width="1.700"/></svg>
<div style="left:1810.2px;top:1879px;width:304px;height:44px;background:#393939;"></div>
<div class="m" style="left:1090.2px;top:1883.99px;height:35px;line-height:35px;font-size:26.6px;color:#ff6b68;letter-spacing:-0.015px;"><span style="color:#ff6b68;">ePipeline.forEach(</span><span style="color:#8a8a8a;text-decoration:underline;text-decoration-thickness:2px;text-underline-offset:4px;">ReferencePipeline.java:596</span><span style="color:#ff6b68;">)</span><span style="color:#8c8c8c;"> &lt;4 internal lines&gt;</span></div>
<svg style="left:1071px;top:1938px;" width="18" height="18" viewBox="0 0 18 18"><path d="M1 1H17V17H1Z" stroke="#606366" stroke-width="1.700" fill="none"/><path d="M4.500 9H13.500M9 4.500V13.500" stroke="#606366" stroke-width="1.700"/></svg>
<div style="left:1938.2px;top:1923px;width:304px;height:44px;background:#393939;"></div>
<div class="m" style="left:1090.2px;top:1927.99px;height:35px;line-height:35px;font-size:26.6px;color:#ff6b68;letter-spacing:-0.015px;"><span style="color:#ff6b68;">ListSpliterator.forEachRemaining(</span><span style="color:#8a8a8a;text-decoration:underline;text-decoration-thickness:2px;text-underline-offset:4px;">ArrayList.java:1625</span><span style="color:#ff6b68;">)</span><span style="color:#8c8c8c;"> &lt;2 internal lines&gt;</span></div>
<div class="m" style="left:1090.2px;top:1971.99px;height:35px;line-height:35px;font-size:26.6px;color:#ff6b68;letter-spacing:-0.015px;"><span style="color:#ff6b68;">ps$ForEachOp.evaluateSequential(</span><span style="color:#8a8a8a;text-decoration:underline;text-decoration-thickness:2px;text-underline-offset:4px;">ForEachOps.java:150</span><span style="color:#ff6b68;">)</span></div>
<div style="left:3164px;top:1441px;width:16px;height:140px;background:#4d4d4d;"></div>
<div style="left:1596px;top:1964px;width:1556px;height:16px;background:rgba(94,94,94,0.82);"></div>
<div style="left:40px;top:1984px;width:3182px;height:82px;background:#3c3f41;"></div>
<div style="left:0px;top:1983px;width:3222px;height:1px;background:#323232;"></div>
<svg style="left:3199.6px;top:1455px;" width="24" height="26" viewBox="0 0 24 26"><path d="M12 25V3M2.500 12.500L12 2.800L21.500 12.500" stroke="#afb1b3" stroke-width="4" fill="none"/></svg>
<svg style="left:3199.6px;top:1506px;" width="24" height="26" viewBox="0 0 24 26"><path d="M12 1V23M2.500 13.500L12 23.200L21.500 13.500" stroke="#afb1b3" stroke-width="4" fill="none"/></svg>
<svg style="left:3198px;top:1558px;" width="30" height="30" viewBox="0 0 30 30"><path d="M2 2.500H30M2 12H14M2 21.500H8" stroke="#afb1b3" stroke-width="4" fill="none"/><path d="M24 12V21.500H17" stroke="#afb1b3" stroke-width="4" fill="none"/><path d="M11 21.500L19 15V28Z" fill="#afb1b3"/></svg>
<svg style="left:3198px;top:1611px;" width="30" height="24" viewBox="0 0 30 24"><path d="M2 3H10M2 11H10M2 20.500H30" stroke="#afb1b3" stroke-width="4" fill="none"/><path d="M20 0V9" stroke="#afb1b3" stroke-width="4" fill="none"/><path d="M12.500 8H27.500L20 16Z" fill="#afb1b3"/></svg>
<svg style="left:3195.6px;top:1663px;" width="32" height="26" viewBox="0 0 32 26"><rect x="9" y="0" width="23" height="6.500" fill="#afb1b3"/><path d="M2 9.500H32V20.500H27V15H8V20.500H2Z" fill="#afb1b3"/><rect x="9.500" y="16.500" width="17" height="7.500" stroke="#afb1b3" stroke-width="3" fill="none"/></svg>
<svg style="left:3201px;top:1712px;" width="26" height="28" viewBox="0 0 26 28"><rect x="0" y="3.500" width="26" height="4" fill="#afb1b3"/><rect x="8" y="0.500" width="10" height="4" fill="#afb1b3"/><path d="M3 10H26V24C26 26 25 27.500 23 27.500H6C4 27.500 3 26 3 24Z" fill="#afb1b3"/></svg>
<div style="left:0px;top:1984px;width:3222px;height:43px;background:#3c3f41;"></div>
<div style="left:0px;top:2027.4px;width:3222px;height:2.2px;background:#4b4b4b;"></div>
<div style="left:136px;top:1985px;width:108px;height:42px;background:#2d2f30;"></div>
<svg style="left:61px;top:1996px;" width="20" height="25" viewBox="0 0 20 25"><g stroke="#afb1b3" stroke-width="3.400" fill="none"><path d="M4.500 4.500V20.500M4.500 17C4.500 11.500 14.500 13.500 14.500 6.500"/></g><circle cx="4.500" cy="4" r="3.500" fill="#afb1b3"/><circle cx="4.500" cy="20.500" r="3.500" fill="#afb1b3"/><circle cx="14.500" cy="6" r="3.500" fill="#afb1b3"/></svg>
<div class="u" style="left:92px;top:1993.48px;height:31px;line-height:31px;font-size:24px;color:#bbbbbb;letter-spacing:-1.684px;">Git</div>
<svg style="left:157px;top:1996px;" width="17" height="22" viewBox="0 0 17 22"><path d="M0 0L17 11L0 22Z" fill="#c4c6c8"/></svg>
<div class="u" style="left:189px;top:1993.48px;height:31px;line-height:31px;font-size:24px;color:#dcdcdc;letter-spacing:-3.864px;">Run</div>
<svg style="left:267px;top:1998px;" width="22" height="18" viewBox="0 0 22 18"><g fill="#afb1b3"><rect x="0" y="0" width="4" height="4"/><rect x="0" y="7" width="4" height="4"/><rect x="0" y="14" width="4" height="4"/><rect x="7" y="0" width="15" height="4"/><rect x="7" y="7" width="15" height="4"/><rect x="7" y="14" width="15" height="4"/></g></svg>
<div class="u" style="left:298.5px;top:1993.48px;height:31px;line-height:31px;font-size:24px;color:#bbbbbb;letter-spacing:-3.043px;">TODO</div>
<svg style="left:402px;top:1996px;" width="22" height="22" viewBox="0 0 22 22"><circle cx="11" cy="11" r="11" fill="#afb1b3"/><rect x="9.400" y="4" width="3.200" height="9" fill="#3c3f41"/><rect x="9.400" y="15" width="3.200" height="3.200" fill="#3c3f41"/></svg>
<div class="u" style="left:435px;top:1993.48px;height:31px;line-height:31px;font-size:24px;color:#bbbbbb;letter-spacing:-1.581px;">Problems</div>
<svg style="left:569px;top:1997px;" width="24" height="20" viewBox="0 0 24 20"><rect x="0" y="0" width="24" height="20" fill="#afb1b3"/><path d="M4 5L10 10L4 15M12 15H20" stroke="#3c3f41" stroke-width="2.400" fill="none"/></svg>
<div class="u" style="left:603px;top:1993.48px;height:31px;line-height:31px;font-size:24px;color:#bbbbbb;letter-spacing:-1.579px;">Terminal</div>
<svg style="left:724px;top:1994px;" width="27" height="26" viewBox="0 0 27 26"><g fill="#afb1b3"><path d="M0 8L8 0L17 2L11 8L7 7L4 11Z"/><path d="M10 10L13.500 6.500L27 21L23 25Z"/></g></svg>
<div class="u" style="left:759px;top:1993.48px;height:31px;line-height:31px;font-size:24px;color:#bbbbbb;letter-spacing:-1.767px;">Build</div>
<svg style="left:3046px;top:1995px;" width="27" height="27" viewBox="0 0 27 27"><path d="M13 0A13 13 0 0 1 26 13V26H13A13 13 0 0 1 13 0Z" fill="#499c54"/><text x="8.200" y="20" font-family="Liberation Sans, sans-serif" font-weight="bold" font-size="17.500" fill="#fff">1</text></svg>
<div class="u" style="left:3080.5px;top:1993.48px;height:31px;line-height:31px;font-size:24px;color:#bbbbbb;letter-spacing:-1.723px;">Event Log</div>
<div style="left:0px;top:2029.4px;width:3222px;height:37px;background:#3c3f41;"></div>
<svg style="left:8px;top:2036px;" width="24" height="24" viewBox="0 0 24 24"><path d="M5.500 1.500H22.500V18.500H5.500Z" stroke="#afb1b3" stroke-width="2" fill="none"/><path d="M1.500 6V22.500H18" stroke="#afb1b3" stroke-width="2" fill="none"/></svg>
<div class="u" style="left:50px;top:2033.18px;height:31px;line-height:31px;font-size:24px;color:#bbbbbb;letter-spacing:-0.258px;">Tests failed: 2, passed: 20 (a minute ago)</div>
<div class="u" style="left:2705.5px;top:2033.18px;height:31px;line-height:31px;font-size:24px;color:#bbbbbb;letter-spacing:-1.140px;">105:6</div>
<div class="u" style="left:2786px;top:2033.18px;height:31px;line-height:31px;font-size:24px;color:#bbbbbb;letter-spacing:-3.424px;">CRLF</div>
<div class="u" style="left:2862.5px;top:2033.18px;height:31px;line-height:31px;font-size:24px;color:#bbbbbb;letter-spacing:-1.023px;">UTF-8</div>
<div class="u" style="left:2950.5px;top:2033.18px;height:31px;line-height:31px;font-size:24px;color:#bbbbbb;letter-spacing:-0.880px;">4 spaces</div>
<svg style="left:3068px;top:2035px;" width="20" height="29" viewBox="0 0 20 29"><g stroke="#afb1b3" stroke-width="3.800" fill="none"><path d="M4.500 5V24M4.500 20C4.500 13.500 15 15.500 15 7.500"/></g><circle cx="4.500" cy="4.300" r="4" fill="#afb1b3"/><circle cx="4.500" cy="24.300" r="4" fill="#afb1b3"/><circle cx="15" cy="7" r="4" fill="#afb1b3"/></svg>
<div class="u" style="left:3098.5px;top:2033.18px;height:31px;line-height:31px;font-size:24px;color:#bbbbbb;letter-spacing:-0.290px;">master</div>
<svg style="left:3189px;top:2035px;" width="24" height="25" viewBox="0 0 24 25"><path d="M2.800 12V7.500A4.700 4.700 0 0 1 12.200 7.500V11" stroke="#afb1b3" stroke-width="3.500" fill="none"/><rect x="7" y="11.700" width="16" height="12.500" fill="#afb1b3"/></svg>
<div style="left:0;top:2067px;width:3222px;height:77px;background:linear-gradient(90deg,#353040 0%,#3d3748 2.8%,#444052 12%,#4a4558 24.2%,#50495c 32%,#51485c 36%,#4d4559 42.5%,#4b4659 45.5%,#4b4457 48.4%,#4e4155 49.5%,#46425a 51%,#444057 56%,#46425a 62%,#48445b 70%,#4c475e 100%)"></div>
<svg style="left:28px;top:2090px;" width="33" height="33" viewBox="0 0 33 33"><g fill="#fff"><path d="M0 4.600L13.500 2.800V15.700H0Z"/><path d="M15.200 2.500L33 0V15.700H15.200Z"/><path d="M0 17.300H13.500V30.200L0 28.400Z"/><path d="M15.200 17.300H33V33L15.200 30.500Z"/></g></svg>
<div style="left:92px;top:2068px;width:687px;height:76px;background:#f3f3f3;"></div>
<div style="left:92px;top:2067px;width:687px;height:1.5px;background:#a0a0a0;"></div>
<div style="left:92px;top:2067px;width:2px;height:77px;background:#55525c;"></div>
<div style="left:778px;top:2067px;width:1.5px;height:77px;background:#8a8890;"></div>
<svg style="left:115px;top:2089px;" width="34" height="34" viewBox="0 0 34 34"><circle cx="21" cy="12.500" r="10" stroke="#1a1a1a" stroke-width="2.400" fill="none"/><path d="M14 20L1.500 32.500" stroke="#1a1a1a" stroke-width="2.600"/></svg>
<div class="u" style="left:172.5px;top:2091.10px;height:39px;line-height:39px;font-size:30px;color:#2b2b2b;letter-spacing:-0.539px;">Type here to search</div>
<svg style="left:810px;top:2090px;" width="34" height="34" viewBox="0 0 34 34"><circle cx="17" cy="17" r="14.300" stroke="#fff" stroke-width="3.400" fill="none"/></svg>
<svg style="left:907px;top:2091px;" width="36" height="32" viewBox="0 0 36 32"><g stroke="#fff" stroke-width="2.200" fill="none"><path d="M1 1.500H21M1 30.500H21"/><rect x="2" y="6.500" width="18" height="19"/><path d="M28.500 1V31"/></g><circle cx="28.500" cy="11" r="3" fill="#fff"/></svg>
<svg style="left:1004px;top:2087px;" width="44" height="38" viewBox="0 0 44 38"><path d="M1 6C1 4 2 3 4 3H15L19 7H40C42 7 43 8 43 10V33C43 35 42 36 40 36H4C2 36 1 35 1 33Z" fill="#f7b928"/><path d="M1 14H43V33C43 35 42 36 40 36H4C2 36 1 35 1 33Z" fill="#fdd65c"/><rect x="10" y="22" width="24" height="14" fill="#3a96dd"/><rect x="16" y="28" width="12" height="8" fill="#fdd65c"/></svg>
<svg style="left:1100px;top:2083px;" width="48" height="50" viewBox="0 0 48 50"><path d="M14 12V7C14 3 17 1 24 1C31 1 34 3 34 7V12" stroke="#35a0e8" stroke-width="3" fill="none"/><path d="M2 11H46V40C46 46 43 49 38 49H10C5 49 2 46 2 40Z" fill="#f1f1f1"/><rect x="13" y="18" width="10" height="10" fill="#f25022"/><rect x="25" y="18" width="10" height="10" fill="#7fba00"/><rect x="13" y="30" width="10" height="10" fill="#00a4ef"/><rect x="25" y="30" width="10" height="10" fill="#ffb900"/></svg>
<svg style="left:1197px;top:2084px;" width="50" height="46" viewBox="0 0 50 46"><path d="M1 17L25 0L49 17V44H1Z" fill="#1a73c7"/><path d="M1 17L25 33L49 17V44H1Z" fill="#3aa9f0"/><path d="M1 44L25 26L49 44Z" fill="#2492e0"/><path d="M6 14H44V24L25 36L6 24Z" fill="#e9f4fc"/><path d="M1 17L25 33L49 17V44H1Z" fill="#35a2ec"/><path d="M1 44L22 27L25 29L28 27L49 44Z" fill="#1f86d6"/></svg>
<svg style="left:1296px;top:2084px;" width="52" height="50" viewBox="0 0 52 50"><circle cx="23" cy="23" r="22" fill="#fff"/><path d="M23 1A22 22 0 0 1 42 12H23A11 11 0 0 0 13.500 17.500L4 12A22 22 0 0 1 23 1Z" fill="#db4437"/><path d="M42 12A22 22 0 0 1 23 45L32.500 28.500A11 11 0 0 0 32.500 17.500L33 12Z" fill="#f4c20d"/><path d="M4 12L13.500 28.500A11 11 0 0 0 23 34L32.500 28.500L23 45A22 22 0 0 1 4 12Z" fill="#0f9d58"/><circle cx="23" cy="23" r="8.500" fill="#4285f4" stroke="#fff" stroke-width="2.400"/><path d="M26 33C30 25 40 24 45 30C50 31 52 34 50 37C46 37 44 42 38 46C34 49 28 47 30 42C27 40 25 37 26 33Z" fill="#7f9fc6"/><path d="M32 34C36 30 42 31 44 34C40 36 36 40 33 41Z" fill="#c9d8ea"/></svg>
<div style="left:1280px;top:2142px;width:80px;height:2px;background:#b9b3dc;"></div>
<div style="left:1370px;top:2067px;width:96px;height:77px;background:#6f6a9c;"></div>
<div style="left:1370px;top:2142px;width:96px;height:2px;background:#c4bfee;"></div>
<svg style="left:1398px;top:2087px;" width="40" height="40" viewBox="0 0 42 42"><defs><linearGradient id="lg3" x1="0" y1="0" x2="1" y2="1"><stop offset="0" stop-color="#fc801d"/><stop offset="0.350" stop-color="#fe2857"/><stop offset="0.700" stop-color="#087cfa"/><stop offset="1" stop-color="#087cfa"/></linearGradient></defs><rect width="42" height="42" fill="url(#lg3)"/><path d="M0 15V42H22Z" fill="#087cfa"/><rect x="5" y="5" width="32" height="32" fill="#000"/><rect x="9" y="30" width="12" height="2.400" fill="#fff"/><text x="8" y="21.500" font-family="Liberation Mono, monospace" font-weight="bold" font-size="17.500" fill="#fff" textLength="18" lengthAdjust="spacingAndGlyphs">IJ</text></svg>
<svg style="left:2192px;top:2086px;" width="42" height="42" viewBox="0 0 42 42"><defs><linearGradient id="lgm" x1="0.3" y1="0" x2="0.7" y2="1"><stop offset="0" stop-color="#ffe000"/><stop offset="0.6" stop-color="#ffc400"/><stop offset="1" stop-color="#ff9d00"/></linearGradient><mask id="mkm"><rect width="42" height="42" fill="#fff"/><circle cx="13.500" cy="13" r="17" fill="#000"/></mask></defs><circle cx="20.500" cy="21" r="19.500" fill="url(#lgm)" mask="url(#mkm)"/></svg>
<div class="u" style="left:2254.5px;top:2092.29px;height:36px;line-height:36px;font-size:28px;color:#fff;letter-spacing:-1.815px;">50°F</div>
<div class="u" style="left:2325px;top:2092.29px;height:36px;line-height:36px;font-size:28px;color:#fff;letter-spacing:-0.853px;">Clear</div>
<svg style="left:2430px;top:2098px;" width="28" height="16" viewBox="0 0 28 16"><path d="M1.500 14.500L14 2L26.500 14.500" stroke="#fff" stroke-width="2.200" fill="none"/></svg>
<svg style="left:2494px;top:2091px;" width="28" height="34" viewBox="0 0 28 34"><g stroke="#fff" stroke-width="2" fill="none"><rect x="3" y="9" width="15" height="15" rx="4"/><path d="M18 14L25 10V23L18 19"/><path d="M5 5A10 6 0 0 1 20 5M5 29A10 6 0 0 0 20 29"/></g></svg>
<svg style="left:2554px;top:2095px;" width="34" height="28" viewBox="0 0 34 28"><g stroke="#fff" stroke-width="2" fill="none"><rect x="3" y="1" width="28" height="19"/><path d="M0 26H34"/></g><path d="M17 5L23 12H19V17H15V12H11Z" fill="#fff"/></svg>
<svg style="left:2617px;top:2097px;" width="38" height="24" viewBox="0 0 38 24"><path d="M9 23A8 8 0 0 1 8 7A11 11 0 0 1 28 8A8 8 0 0 1 30 23Z" fill="#d0d0d0"/><path d="M14 23A7 7 0 0 1 17 10A9 9 0 0 1 31 13A6 6 0 0 1 31 23Z" fill="#f2f2f2"/></svg>
<svg style="left:2683px;top:2089px;" width="36" height="38" viewBox="0 0 36 38"><g stroke="#fff" stroke-width="2" fill="none"><path d="M1 6L31 1V27L1 32Z"/><path d="M11 13A6 6 0 0 1 21 12M21 20A6 6 0 0 1 11 21"/><path d="M21 8V12.500H16.500M11 25V20.500H15.500"/></g><circle cx="25" cy="28" r="7" fill="#2b7be0"/></svg>
<svg style="left:2747px;top:2097px;" width="34" height="20" viewBox="0 0 34 20"><rect x="1" y="1" width="28" height="18" stroke="#fff" stroke-width="2" fill="none"/><rect x="4" y="4" width="19" height="12" fill="#fff"/><rect x="30" y="6" width="3" height="8" fill="#fff"/></svg>
<svg style="left:2815px;top:2095px;" width="30" height="28" viewBox="0 0 30 28"><g stroke="#fff" stroke-width="2.200" fill="none"><path d="M2 26A24 24 0 0 1 26 2"/><path d="M8 26A18 18 0 0 1 26 8"/><path d="M14 26A12 12 0 0 1 26 14"/></g><circle cx="24" cy="24" r="3.200" fill="#fff"/></svg>
<svg style="left:2872px;top:2091px;" width="38" height="34" viewBox="0 0 38 34"><path d="M2 12H8L15 5V29L8 22H2Z" stroke="#fff" stroke-width="2" fill="none"/><g stroke="#fff" stroke-width="2" fill="none"><path d="M20 12A6 6 0 0 1 20 22"/><path d="M24 8A11 11 0 0 1 24 26"/><path d="M28 4A16 16 0 0 1 28 30" opacity="0.450"/></g></svg>
<div class="u" style="left:2936px;top:2094.18px;height:31px;line-height:31px;font-size:24px;color:#fff;letter-spacing:-3.004px;">ENG</div>
<div class="u" style="left:3018.5px;top:2075.18px;height:31px;line-height:31px;font-size:24px;color:#fff;letter-spacing:-0.513px;">8:55 PM</div>
<div class="u" style="left:3008px;top:2111.68px;height:31px;line-height:31px;font-size:24px;color:#fff;letter-spacing:0.204px;">1/26/2022</div>
<svg style="left:3153px;top:2089px;" width="50" height="52" viewBox="0 0 50 52"><path d="M1 2H34V27H14L8 33V27H1Z" fill="#fff"/><path d="M7 9H28M7 14.500H28M7 20H28" stroke="#5a5468" stroke-width="1.800"/><circle cx="31" cy="32" r="15" fill="#6b66a8" stroke="#8f8acb" stroke-width="2"/><text x="24.500" y="40" font-family="Liberation Sans, sans-serif" font-weight="bold" font-size="22" fill="#fff">2</text></svg>
</div></body></html>
